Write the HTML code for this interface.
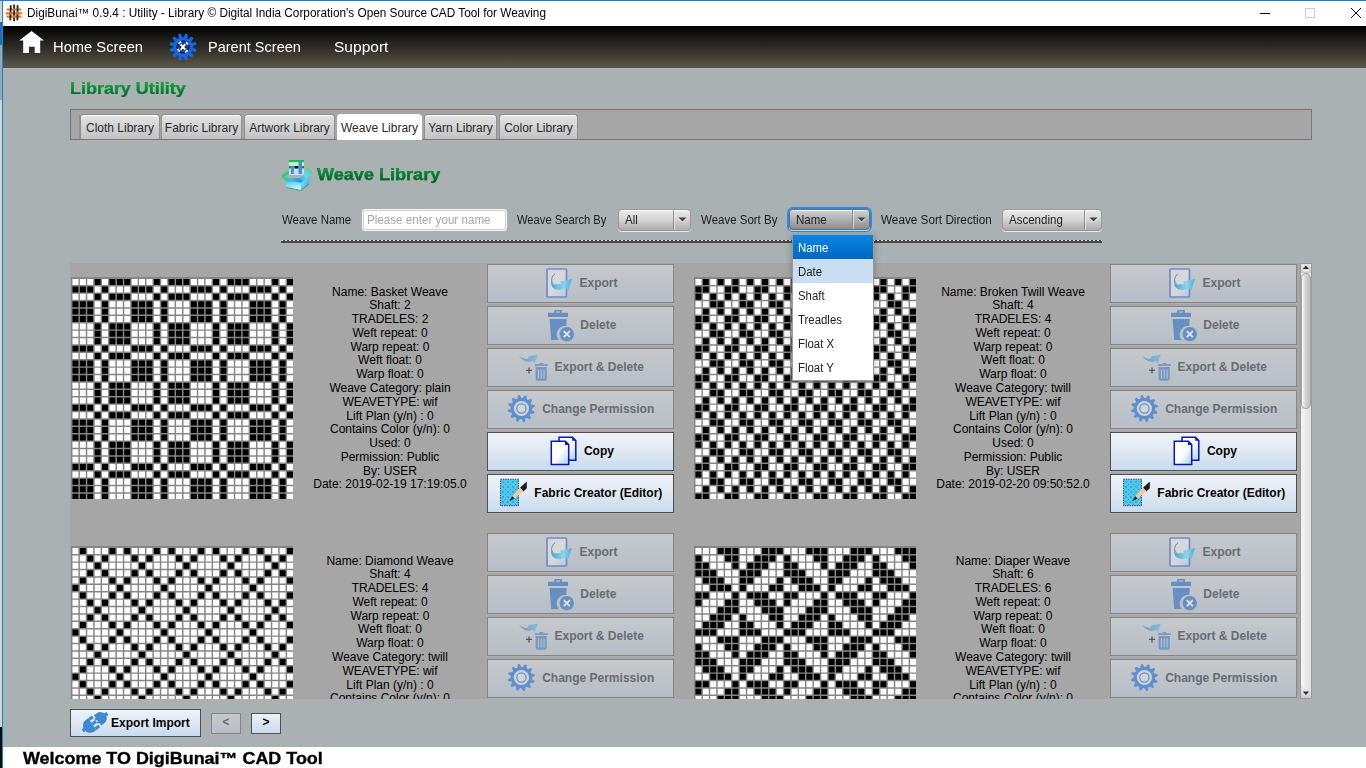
<!DOCTYPE html><html><head><meta charset="utf-8"><style>
html,body{margin:0;padding:0;}
body{width:1366px;height:768px;overflow:hidden;position:relative;background:#aab1b2;font-family:"Liberation Sans", sans-serif;}
.t{position:absolute;white-space:pre;font-family:"Liberation Sans", sans-serif;}
svg{display:block}
</style></head><body><div style="position:absolute;left:0px;top:0px;width:3px;height:768px;background:#d3d3d3"></div><div style="position:absolute;left:0px;top:727px;width:2px;height:41px;background:#0b0b0b"></div><div style="position:absolute;left:0px;top:22px;width:2px;height:23px;background:#1c6fc0"></div><div style="position:absolute;left:0px;top:45px;width:2px;height:55px;background:#9aa6b4"></div><div style="position:absolute;left:0px;top:0px;width:1366px;height:1px;background:#1883d7"></div><div style="position:absolute;left:2px;top:0px;width:1px;height:768px;background:#1883d7"></div><div style="position:absolute;left:3px;top:1px;width:1363px;height:25px;background:#fff"></div><div class="t" style="left:27px;top:6.84px;font-size:12px;line-height:12px;font-weight:400;color:#000;transform:scaleX(0.9836997725549659);transform-origin:left;">DigiBunai™ 0.9.4 : Utility - Library © Digital India Corporation's Open Source CAD Tool for Weaving</div><svg style="position:absolute;left:0px;top:0px" width="26" height="26" viewBox="0 0 26 26">
<g stroke="#e37a2c" stroke-width="2.2" stroke-linecap="round"><path d="M7.5 9.5H20.5M6.5 13.3H21.5M7.5 16.6H20.5"/></g>
<g stroke="#2e2e2e" stroke-width="1.9" stroke-linecap="round"><path d="M10.8 6L10.3 19.5M14.1 5.2L14.1 20.5M17.6 6L17.4 19.5"/></g>
<g stroke="#e37a2c" stroke-width="2.2"><path d="M13 9.5H15.2M9.6 13.3H11.6M16.4 13.3H18.6M13 16.6H15.2"/></g>
</svg><div style="position:absolute;left:1260px;top:13px;width:10px;height:1px;background:#000"></div><div style="position:absolute;left:1305px;top:8px;width:10px;height:10px;border:1px solid #cfcfcf;box-sizing:border-box"></div><svg style="position:absolute;left:1350px;top:7px" width="12" height="12" viewBox="0 0 12 12"><path d="M1 1L11 11M11 1L1 11" stroke="#000" stroke-width="1"/></svg><div style="position:absolute;left:3px;top:26px;width:1363px;height:42px;background:linear-gradient(#000 0%,#1d1b16 30%,#3c3a31 68%,#5a5648 96%,#545040 100%)"></div><div style="position:absolute;left:3px;top:68px;width:1363px;height:1px;background:#b4babc"></div><svg style="position:absolute;left:19px;top:31px" width="26" height="23" viewBox="0 0 26 23"><path d="M0.2 9.6L12.6 0L25 9.6H21.2V22H15.7V15.8H10V22H4.2V9.6Z" fill="#fff"/></svg><div class="t" style="left:52.5px;top:39.30px;font-size:15px;line-height:15px;font-weight:400;color:#fff;transform:scaleX(0.9814612868047983);transform-origin:left;">Home Screen</div><svg style="position:absolute;left:164.5px;top:29px" width="36" height="36" viewBox="-18 -18 36 36"><path d="M-2.1 -8.5L-1.3 -13.6H1.3L2.1 -8.5Z" fill="#1466e6" transform="rotate(15)"/><path d="M-2.1 -8.5L-1.3 -13.6H1.3L2.1 -8.5Z" fill="#1466e6" transform="rotate(45)"/><path d="M-2.1 -8.5L-1.3 -13.6H1.3L2.1 -8.5Z" fill="#1466e6" transform="rotate(75)"/><path d="M-2.1 -8.5L-1.3 -13.6H1.3L2.1 -8.5Z" fill="#1466e6" transform="rotate(105)"/><path d="M-2.1 -8.5L-1.3 -13.6H1.3L2.1 -8.5Z" fill="#1466e6" transform="rotate(135)"/><path d="M-2.1 -8.5L-1.3 -13.6H1.3L2.1 -8.5Z" fill="#1466e6" transform="rotate(165)"/><path d="M-2.1 -8.5L-1.3 -13.6H1.3L2.1 -8.5Z" fill="#1466e6" transform="rotate(195)"/><path d="M-2.1 -8.5L-1.3 -13.6H1.3L2.1 -8.5Z" fill="#1466e6" transform="rotate(225)"/><path d="M-2.1 -8.5L-1.3 -13.6H1.3L2.1 -8.5Z" fill="#1466e6" transform="rotate(255)"/><path d="M-2.1 -8.5L-1.3 -13.6H1.3L2.1 -8.5Z" fill="#1466e6" transform="rotate(285)"/><path d="M-2.1 -8.5L-1.3 -13.6H1.3L2.1 -8.5Z" fill="#1466e6" transform="rotate(315)"/><path d="M-2.1 -8.5L-1.3 -13.6H1.3L2.1 -8.5Z" fill="#1466e6" transform="rotate(345)"/><circle r="9.8" fill="#1466e6"/><circle r="6.6" fill="#1c1a15"/><circle r="5.4" fill="none" stroke="#fff" stroke-width="2" stroke-dasharray="3.2 5.3" transform="rotate(-60)"/><circle r="4.2" fill="none" stroke="#1466e6" stroke-width="1.2"/><path d="M-2.2 -2.6L2.2 2.6M2.2 -2.6L-2.2 2.6" stroke="#fff" stroke-width="2.2"/></svg><div class="t" style="left:207.5px;top:39.30px;font-size:15px;line-height:15px;font-weight:400;color:#fff;transform:scaleX(0.9688184377933049);transform-origin:left;">Parent Screen</div><div class="t" style="left:333.5px;top:39.30px;font-size:15px;line-height:15px;font-weight:400;color:#fff;transform:scaleX(1.0352045670789725);transform-origin:left;">Support</div><div class="t" style="left:69.8px;top:79.81px;font-size:17px;line-height:17px;font-weight:700;color:transparent;transform:scaleX(1.0556569343065694);transform-origin:left;background:linear-gradient(#12aa34 15%,#006a2c 85%);-webkit-background-clip:text;background-clip:text;-webkit-text-stroke:0.2px #0a8a34;">Library Utility</div><div style="position:absolute;left:70px;top:109px;width:1242px;height:31px;background:#a6a6a6;border:1px solid #767676;box-sizing:border-box"></div><div style="position:absolute;left:79px;top:115px;width:1px;height:24px;background:#909090"></div><div style="position:absolute;left:80px;top:114px;width:80px;height:25px;background:linear-gradient(#f4f4f4 0,#e0e0e0 10%,#c2c2c2 100%);border:1px solid #8f8f8f;border-bottom:none;border-radius:4px 4px 0 0;box-sizing:border-box;box-shadow:inset 0 1px 0 #fff"></div><div class="t" style="left:120.0px;transform:translateX(-50%) scaleX(1.0);top:121.84px;font-size:12px;line-height:12px;font-weight:400;color:#2a2a2a;">Cloth Library</div><div style="position:absolute;left:161px;top:114px;width:81px;height:25px;background:linear-gradient(#f4f4f4 0,#e0e0e0 10%,#c2c2c2 100%);border:1px solid #8f8f8f;border-bottom:none;border-radius:4px 4px 0 0;box-sizing:border-box;box-shadow:inset 0 1px 0 #fff"></div><div class="t" style="left:201.5px;transform:translateX(-50%) scaleX(1.0);top:121.84px;font-size:12px;line-height:12px;font-weight:400;color:#2a2a2a;">Fabric Library</div><div style="position:absolute;left:244px;top:114px;width:91px;height:25px;background:linear-gradient(#f4f4f4 0,#e0e0e0 10%,#c2c2c2 100%);border:1px solid #8f8f8f;border-bottom:none;border-radius:4px 4px 0 0;box-sizing:border-box;box-shadow:inset 0 1px 0 #fff"></div><div class="t" style="left:289.5px;transform:translateX(-50%) scaleX(1.0);top:121.84px;font-size:12px;line-height:12px;font-weight:400;color:#2a2a2a;">Artwork Library</div><div style="position:absolute;left:337px;top:114px;width:85px;height:26px;background:#fff;border-radius:4px 4px 0 0"></div><div class="t" style="left:379.5px;transform:translateX(-50%) scaleX(1.0);top:121.84px;font-size:12px;line-height:12px;font-weight:400;color:#2a2a2a;">Weave Library</div><div style="position:absolute;left:424px;top:114px;width:73px;height:25px;background:linear-gradient(#f4f4f4 0,#e0e0e0 10%,#c2c2c2 100%);border:1px solid #8f8f8f;border-bottom:none;border-radius:4px 4px 0 0;box-sizing:border-box;box-shadow:inset 0 1px 0 #fff"></div><div class="t" style="left:460.5px;transform:translateX(-50%) scaleX(1.0);top:121.84px;font-size:12px;line-height:12px;font-weight:400;color:#2a2a2a;">Yarn Library</div><div style="position:absolute;left:499px;top:114px;width:79px;height:25px;background:linear-gradient(#f4f4f4 0,#e0e0e0 10%,#c2c2c2 100%);border:1px solid #8f8f8f;border-bottom:none;border-radius:4px 4px 0 0;box-sizing:border-box;box-shadow:inset 0 1px 0 #fff"></div><div class="t" style="left:538.5px;transform:translateX(-50%) scaleX(1.0);top:121.84px;font-size:12px;line-height:12px;font-weight:400;color:#2a2a2a;">Color Library</div><svg style="position:absolute;left:278px;top:156px" width="38" height="38" viewBox="0 0 38 38">
<defs><linearGradient id="bxf" x1="0" y1="0" x2="0.3" y2="1"><stop offset="0" stop-color="#38c8f0"/><stop offset="1" stop-color="#d8f8ff"/></linearGradient>
<linearGradient id="bxr" x1="0" y1="0" x2="1" y2="1"><stop offset="0" stop-color="#a8e8ff"/><stop offset="1" stop-color="#10a8e0"/></linearGradient>
<linearGradient id="bxl" x1="0" y1="0" x2="1" y2="0"><stop offset="0" stop-color="#20d870"/><stop offset="0.5" stop-color="#40b8e8"/><stop offset="1" stop-color="#0898d8"/></linearGradient></defs>
<rect x="11" y="4" width="15" height="15" fill="#c4e2f4"/><rect x="11" y="4" width="15" height="2.2" fill="#10c040"/>
<rect x="11" y="10" width="15" height="2.4" fill="#2a7a50"/><rect x="11" y="6.3" width="15" height="3.7" fill="#c0f0d0"/>
<rect x="13" y="10" width="2.8" height="8" fill="#4a8ed0"/><rect x="20.5" y="5" width="3.5" height="13" fill="#4a8ed0"/><rect x="17" y="10" width="3" height="2.4" fill="#101010"/>
<path d="M8 25L23 26.5L23 34.5L8.5 31.5Z" fill="url(#bxf)"/>
<path d="M23 26.5L31.5 20L31 28L23 34.5Z" fill="url(#bxr)"/>
<path d="M3 19.5L11 14.5L11 17.5L5 22.5Z" fill="#30d070"/>
<path d="M5 21.5L22.5 22.5L23.5 26.5L8 25Z" fill="url(#bxl)"/>
<linearGradient id="bxrf" x1="1" y1="0" x2="0" y2="1"><stop offset="0" stop-color="#30e070"/><stop offset="0.6" stop-color="#70d0f0"/><stop offset="1" stop-color="#10a0e0"/></linearGradient><path d="M22.5 22.5L30 11L35 17L23.5 26.5Z" fill="url(#bxrf)"/>
<path d="M23.5 26.5L35 17L31.5 20Z" fill="#20b8e0"/>
<path d="M8.5 31.5L23 34.5L31 28" fill="none" stroke="#3a8a50" stroke-width="0.8"/>
</svg><div class="t" style="left:317.3px;top:166.31px;font-size:17px;line-height:17px;font-weight:700;color:transparent;transform:scaleX(1.0629853321829164);transform-origin:left;background:linear-gradient(#0c9c38 15%,#00642c 80%);-webkit-background-clip:text;background-clip:text;-webkit-text-stroke:0.25px #00742e;">Weave Library</div><div class="t" style="left:281.5px;top:213.84px;font-size:12px;line-height:12px;font-weight:400;color:#1a1a1a;transform:scaleX(0.9547461368653422);transform-origin:left;">Weave Name</div><div style="position:absolute;left:363px;top:210px;width:143px;height:20px;background:#fff;border:1px solid #cfcfcf;border-radius:2px;box-sizing:border-box;box-shadow:0 0 0 1px #f4f4f4"></div><div class="t" style="left:366.8px;top:213.84px;font-size:12px;line-height:12px;font-weight:400;color:#a8a8a8;transform:scaleX(0.9700965387332234);transform-origin:left;">Please enter your name</div><div class="t" style="left:517.2px;top:213.84px;font-size:12px;line-height:12px;font-weight:400;color:#1a1a1a;transform:scaleX(0.9329020139830951);transform-origin:left;">Weave Search By</div><div style="position:absolute;left:618px;top:209px;width:73px;height:22px;background:linear-gradient(#ececec,#d6d6d6 45%,#adadad);border:1px solid #9a9a9a;border-radius:4px;box-sizing:border-box;box-shadow:inset 0 1px 0 rgba(255,255,255,0.8),0 1px 0 rgba(255,255,255,0.7)"></div><div style="position:absolute;left:673px;top:210px;width:1px;height:20px;background:#8c8c8c"></div><div style="position:absolute;left:674px;top:210px;width:1px;height:20px;background:rgba(255,255,255,0.5)"></div><svg style="position:absolute;left:678px;top:217px" width="9" height="7" viewBox="0 0 9 7"><path d="M0.5 1.5H8.5L4.5 5.5Z" fill="#fff" opacity="0.7"/><path d="M0.5 0.5H8.5L4.5 4.5Z" fill="#454545"/></svg><div class="t" style="left:625px;top:214.34px;font-size:12px;line-height:12px;font-weight:400;color:#222;transform:scaleX(0.96);transform-origin:left;">All</div><div class="t" style="left:701.3px;top:213.84px;font-size:12px;line-height:12px;font-weight:400;color:#1a1a1a;transform:scaleX(0.9572735246209748);transform-origin:left;">Weave Sort By</div><div style="position:absolute;left:787px;top:207px;width:85px;height:25px;border:2px solid #1e8ff0;border-radius:6px;box-sizing:border-box"></div><div style="position:absolute;left:789px;top:209px;width:81px;height:21px;background:linear-gradient(#d2d2d2,#b0b0b0 50%,#8c8c8c);border:1px solid #6e6e6e;border-radius:4px;box-sizing:border-box;box-shadow:inset 0 1px 0 rgba(255,255,255,0.8),0 1px 0 rgba(255,255,255,0.7)"></div><div style="position:absolute;left:852px;top:210px;width:1px;height:19px;background:#8c8c8c"></div><div style="position:absolute;left:853px;top:210px;width:1px;height:19px;background:rgba(255,255,255,0.5)"></div><svg style="position:absolute;left:857px;top:217px" width="9" height="7" viewBox="0 0 9 7"><path d="M0.5 1.5H8.5L4.5 5.5Z" fill="#fff" opacity="0.7"/><path d="M0.5 0.5H8.5L4.5 4.5Z" fill="#454545"/></svg><div class="t" style="left:796px;top:214.34px;font-size:12px;line-height:12px;font-weight:400;color:#222;transform:scaleX(0.96);transform-origin:left;">Name</div><div class="t" style="left:880.5px;top:213.84px;font-size:12px;line-height:12px;font-weight:400;color:#1a1a1a;transform:scaleX(0.9782608695652174);transform-origin:left;">Weave Sort Direction</div><div style="position:absolute;left:1002px;top:209px;width:100px;height:22px;background:linear-gradient(#ececec,#d6d6d6 45%,#adadad);border:1px solid #9a9a9a;border-radius:4px;box-sizing:border-box;box-shadow:inset 0 1px 0 rgba(255,255,255,0.8),0 1px 0 rgba(255,255,255,0.7)"></div><div style="position:absolute;left:1084px;top:210px;width:1px;height:20px;background:#8c8c8c"></div><div style="position:absolute;left:1085px;top:210px;width:1px;height:20px;background:rgba(255,255,255,0.5)"></div><svg style="position:absolute;left:1089px;top:217px" width="9" height="7" viewBox="0 0 9 7"><path d="M0.5 1.5H8.5L4.5 5.5Z" fill="#fff" opacity="0.7"/><path d="M0.5 0.5H8.5L4.5 4.5Z" fill="#454545"/></svg><div class="t" style="left:1009px;top:214.34px;font-size:12px;line-height:12px;font-weight:400;color:#222;transform:scaleX(0.96);transform-origin:left;">Ascending</div><div style="position:absolute;left:281px;top:240px;width:821px;height:1px;background:repeating-linear-gradient(90deg,#e4e6e6 0 2px,#404040 2px 4px)"></div><div style="position:absolute;left:281px;top:241px;width:821px;height:2px;background:#474747"></div><div style="position:absolute;left:70px;top:263px;width:1230px;height:436px;overflow:hidden;background:#a6a6a6"><div style="position:absolute;left:-70px;top:-263px;width:1366px;height:768px"><svg style="position:absolute;left:71px;top:277px" width="222" height="222" viewBox="0 0 300 300"><rect width="300" height="300" fill="#868686"/><path fill="#000" d="M32 2.8h8v8h-8zM52 2.8h8v8h-8zM62 2.8h8v8h-8zM72 2.8h8v8h-8zM112 2.8h8v8h-8zM132 2.8h8v8h-8zM142 2.8h8v8h-8zM152 2.8h8v8h-8zM192 2.8h8v8h-8zM212 2.8h8v8h-8zM222 2.8h8v8h-8zM232 2.8h8v8h-8zM272 2.8h8v8h-8zM292 2.8h8v8h-8zM2 12.8h8v8h-8zM12 12.8h8v8h-8zM22 12.8h8v8h-8zM42 12.8h8v8h-8zM82 12.8h8v8h-8zM92 12.8h8v8h-8zM102 12.8h8v8h-8zM122 12.8h8v8h-8zM162 12.8h8v8h-8zM172 12.8h8v8h-8zM182 12.8h8v8h-8zM202 12.8h8v8h-8zM242 12.8h8v8h-8zM252 12.8h8v8h-8zM262 12.8h8v8h-8zM282 12.8h8v8h-8zM32 22.8h8v8h-8zM52 22.8h8v8h-8zM62 22.8h8v8h-8zM72 22.8h8v8h-8zM112 22.8h8v8h-8zM132 22.8h8v8h-8zM142 22.8h8v8h-8zM152 22.8h8v8h-8zM192 22.8h8v8h-8zM212 22.8h8v8h-8zM222 22.8h8v8h-8zM232 22.8h8v8h-8zM272 22.8h8v8h-8zM292 22.8h8v8h-8zM2 32.8h8v8h-8zM12 32.8h8v8h-8zM22 32.8h8v8h-8zM42 32.8h8v8h-8zM82 32.8h8v8h-8zM92 32.8h8v8h-8zM102 32.8h8v8h-8zM122 32.8h8v8h-8zM162 32.8h8v8h-8zM172 32.8h8v8h-8zM182 32.8h8v8h-8zM202 32.8h8v8h-8zM242 32.8h8v8h-8zM252 32.8h8v8h-8zM262 32.8h8v8h-8zM282 32.8h8v8h-8zM2 42.8h8v8h-8zM12 42.8h8v8h-8zM22 42.8h8v8h-8zM42 42.8h8v8h-8zM82 42.8h8v8h-8zM92 42.8h8v8h-8zM102 42.8h8v8h-8zM122 42.8h8v8h-8zM162 42.8h8v8h-8zM172 42.8h8v8h-8zM182 42.8h8v8h-8zM202 42.8h8v8h-8zM242 42.8h8v8h-8zM252 42.8h8v8h-8zM262 42.8h8v8h-8zM282 42.8h8v8h-8zM2 52.8h8v8h-8zM12 52.8h8v8h-8zM22 52.8h8v8h-8zM42 52.8h8v8h-8zM82 52.8h8v8h-8zM92 52.8h8v8h-8zM102 52.8h8v8h-8zM122 52.8h8v8h-8zM162 52.8h8v8h-8zM172 52.8h8v8h-8zM182 52.8h8v8h-8zM202 52.8h8v8h-8zM242 52.8h8v8h-8zM252 52.8h8v8h-8zM262 52.8h8v8h-8zM282 52.8h8v8h-8zM32 62.8h8v8h-8zM52 62.8h8v8h-8zM62 62.8h8v8h-8zM72 62.8h8v8h-8zM112 62.8h8v8h-8zM132 62.8h8v8h-8zM142 62.8h8v8h-8zM152 62.8h8v8h-8zM192 62.8h8v8h-8zM212 62.8h8v8h-8zM222 62.8h8v8h-8zM232 62.8h8v8h-8zM272 62.8h8v8h-8zM292 62.8h8v8h-8zM32 72.8h8v8h-8zM52 72.8h8v8h-8zM62 72.8h8v8h-8zM72 72.8h8v8h-8zM112 72.8h8v8h-8zM132 72.8h8v8h-8zM142 72.8h8v8h-8zM152 72.8h8v8h-8zM192 72.8h8v8h-8zM212 72.8h8v8h-8zM222 72.8h8v8h-8zM232 72.8h8v8h-8zM272 72.8h8v8h-8zM292 72.8h8v8h-8zM32 82.8h8v8h-8zM52 82.8h8v8h-8zM62 82.8h8v8h-8zM72 82.8h8v8h-8zM112 82.8h8v8h-8zM132 82.8h8v8h-8zM142 82.8h8v8h-8zM152 82.8h8v8h-8zM192 82.8h8v8h-8zM212 82.8h8v8h-8zM222 82.8h8v8h-8zM232 82.8h8v8h-8zM272 82.8h8v8h-8zM292 82.8h8v8h-8zM2 92.8h8v8h-8zM12 92.8h8v8h-8zM22 92.8h8v8h-8zM42 92.8h8v8h-8zM82 92.8h8v8h-8zM92 92.8h8v8h-8zM102 92.8h8v8h-8zM122 92.8h8v8h-8zM162 92.8h8v8h-8zM172 92.8h8v8h-8zM182 92.8h8v8h-8zM202 92.8h8v8h-8zM242 92.8h8v8h-8zM252 92.8h8v8h-8zM262 92.8h8v8h-8zM282 92.8h8v8h-8zM32 102.8h8v8h-8zM52 102.8h8v8h-8zM62 102.8h8v8h-8zM72 102.8h8v8h-8zM112 102.8h8v8h-8zM132 102.8h8v8h-8zM142 102.8h8v8h-8zM152 102.8h8v8h-8zM192 102.8h8v8h-8zM212 102.8h8v8h-8zM222 102.8h8v8h-8zM232 102.8h8v8h-8zM272 102.8h8v8h-8zM292 102.8h8v8h-8zM2 112.8h8v8h-8zM12 112.8h8v8h-8zM22 112.8h8v8h-8zM42 112.8h8v8h-8zM82 112.8h8v8h-8zM92 112.8h8v8h-8zM102 112.8h8v8h-8zM122 112.8h8v8h-8zM162 112.8h8v8h-8zM172 112.8h8v8h-8zM182 112.8h8v8h-8zM202 112.8h8v8h-8zM242 112.8h8v8h-8zM252 112.8h8v8h-8zM262 112.8h8v8h-8zM282 112.8h8v8h-8zM2 122.8h8v8h-8zM12 122.8h8v8h-8zM22 122.8h8v8h-8zM42 122.8h8v8h-8zM82 122.8h8v8h-8zM92 122.8h8v8h-8zM102 122.8h8v8h-8zM122 122.8h8v8h-8zM162 122.8h8v8h-8zM172 122.8h8v8h-8zM182 122.8h8v8h-8zM202 122.8h8v8h-8zM242 122.8h8v8h-8zM252 122.8h8v8h-8zM262 122.8h8v8h-8zM282 122.8h8v8h-8zM2 132.8h8v8h-8zM12 132.8h8v8h-8zM22 132.8h8v8h-8zM42 132.8h8v8h-8zM82 132.8h8v8h-8zM92 132.8h8v8h-8zM102 132.8h8v8h-8zM122 132.8h8v8h-8zM162 132.8h8v8h-8zM172 132.8h8v8h-8zM182 132.8h8v8h-8zM202 132.8h8v8h-8zM242 132.8h8v8h-8zM252 132.8h8v8h-8zM262 132.8h8v8h-8zM282 132.8h8v8h-8zM32 142.8h8v8h-8zM52 142.8h8v8h-8zM62 142.8h8v8h-8zM72 142.8h8v8h-8zM112 142.8h8v8h-8zM132 142.8h8v8h-8zM142 142.8h8v8h-8zM152 142.8h8v8h-8zM192 142.8h8v8h-8zM212 142.8h8v8h-8zM222 142.8h8v8h-8zM232 142.8h8v8h-8zM272 142.8h8v8h-8zM292 142.8h8v8h-8zM32 152.8h8v8h-8zM52 152.8h8v8h-8zM62 152.8h8v8h-8zM72 152.8h8v8h-8zM112 152.8h8v8h-8zM132 152.8h8v8h-8zM142 152.8h8v8h-8zM152 152.8h8v8h-8zM192 152.8h8v8h-8zM212 152.8h8v8h-8zM222 152.8h8v8h-8zM232 152.8h8v8h-8zM272 152.8h8v8h-8zM292 152.8h8v8h-8zM32 162.8h8v8h-8zM52 162.8h8v8h-8zM62 162.8h8v8h-8zM72 162.8h8v8h-8zM112 162.8h8v8h-8zM132 162.8h8v8h-8zM142 162.8h8v8h-8zM152 162.8h8v8h-8zM192 162.8h8v8h-8zM212 162.8h8v8h-8zM222 162.8h8v8h-8zM232 162.8h8v8h-8zM272 162.8h8v8h-8zM292 162.8h8v8h-8zM2 172.8h8v8h-8zM12 172.8h8v8h-8zM22 172.8h8v8h-8zM42 172.8h8v8h-8zM82 172.8h8v8h-8zM92 172.8h8v8h-8zM102 172.8h8v8h-8zM122 172.8h8v8h-8zM162 172.8h8v8h-8zM172 172.8h8v8h-8zM182 172.8h8v8h-8zM202 172.8h8v8h-8zM242 172.8h8v8h-8zM252 172.8h8v8h-8zM262 172.8h8v8h-8zM282 172.8h8v8h-8zM32 182.8h8v8h-8zM52 182.8h8v8h-8zM62 182.8h8v8h-8zM72 182.8h8v8h-8zM112 182.8h8v8h-8zM132 182.8h8v8h-8zM142 182.8h8v8h-8zM152 182.8h8v8h-8zM192 182.8h8v8h-8zM212 182.8h8v8h-8zM222 182.8h8v8h-8zM232 182.8h8v8h-8zM272 182.8h8v8h-8zM292 182.8h8v8h-8zM2 192.8h8v8h-8zM12 192.8h8v8h-8zM22 192.8h8v8h-8zM42 192.8h8v8h-8zM82 192.8h8v8h-8zM92 192.8h8v8h-8zM102 192.8h8v8h-8zM122 192.8h8v8h-8zM162 192.8h8v8h-8zM172 192.8h8v8h-8zM182 192.8h8v8h-8zM202 192.8h8v8h-8zM242 192.8h8v8h-8zM252 192.8h8v8h-8zM262 192.8h8v8h-8zM282 192.8h8v8h-8zM2 202.8h8v8h-8zM12 202.8h8v8h-8zM22 202.8h8v8h-8zM42 202.8h8v8h-8zM82 202.8h8v8h-8zM92 202.8h8v8h-8zM102 202.8h8v8h-8zM122 202.8h8v8h-8zM162 202.8h8v8h-8zM172 202.8h8v8h-8zM182 202.8h8v8h-8zM202 202.8h8v8h-8zM242 202.8h8v8h-8zM252 202.8h8v8h-8zM262 202.8h8v8h-8zM282 202.8h8v8h-8zM2 212.8h8v8h-8zM12 212.8h8v8h-8zM22 212.8h8v8h-8zM42 212.8h8v8h-8zM82 212.8h8v8h-8zM92 212.8h8v8h-8zM102 212.8h8v8h-8zM122 212.8h8v8h-8zM162 212.8h8v8h-8zM172 212.8h8v8h-8zM182 212.8h8v8h-8zM202 212.8h8v8h-8zM242 212.8h8v8h-8zM252 212.8h8v8h-8zM262 212.8h8v8h-8zM282 212.8h8v8h-8zM32 222.8h8v8h-8zM52 222.8h8v8h-8zM62 222.8h8v8h-8zM72 222.8h8v8h-8zM112 222.8h8v8h-8zM132 222.8h8v8h-8zM142 222.8h8v8h-8zM152 222.8h8v8h-8zM192 222.8h8v8h-8zM212 222.8h8v8h-8zM222 222.8h8v8h-8zM232 222.8h8v8h-8zM272 222.8h8v8h-8zM292 222.8h8v8h-8zM32 232.8h8v8h-8zM52 232.8h8v8h-8zM62 232.8h8v8h-8zM72 232.8h8v8h-8zM112 232.8h8v8h-8zM132 232.8h8v8h-8zM142 232.8h8v8h-8zM152 232.8h8v8h-8zM192 232.8h8v8h-8zM212 232.8h8v8h-8zM222 232.8h8v8h-8zM232 232.8h8v8h-8zM272 232.8h8v8h-8zM292 232.8h8v8h-8zM32 242.8h8v8h-8zM52 242.8h8v8h-8zM62 242.8h8v8h-8zM72 242.8h8v8h-8zM112 242.8h8v8h-8zM132 242.8h8v8h-8zM142 242.8h8v8h-8zM152 242.8h8v8h-8zM192 242.8h8v8h-8zM212 242.8h8v8h-8zM222 242.8h8v8h-8zM232 242.8h8v8h-8zM272 242.8h8v8h-8zM292 242.8h8v8h-8zM2 252.8h8v8h-8zM12 252.8h8v8h-8zM22 252.8h8v8h-8zM42 252.8h8v8h-8zM82 252.8h8v8h-8zM92 252.8h8v8h-8zM102 252.8h8v8h-8zM122 252.8h8v8h-8zM162 252.8h8v8h-8zM172 252.8h8v8h-8zM182 252.8h8v8h-8zM202 252.8h8v8h-8zM242 252.8h8v8h-8zM252 252.8h8v8h-8zM262 252.8h8v8h-8zM282 252.8h8v8h-8zM32 262.8h8v8h-8zM52 262.8h8v8h-8zM62 262.8h8v8h-8zM72 262.8h8v8h-8zM112 262.8h8v8h-8zM132 262.8h8v8h-8zM142 262.8h8v8h-8zM152 262.8h8v8h-8zM192 262.8h8v8h-8zM212 262.8h8v8h-8zM222 262.8h8v8h-8zM232 262.8h8v8h-8zM272 262.8h8v8h-8zM292 262.8h8v8h-8zM2 272.8h8v8h-8zM12 272.8h8v8h-8zM22 272.8h8v8h-8zM42 272.8h8v8h-8zM82 272.8h8v8h-8zM92 272.8h8v8h-8zM102 272.8h8v8h-8zM122 272.8h8v8h-8zM162 272.8h8v8h-8zM172 272.8h8v8h-8zM182 272.8h8v8h-8zM202 272.8h8v8h-8zM242 272.8h8v8h-8zM252 272.8h8v8h-8zM262 272.8h8v8h-8zM282 272.8h8v8h-8zM2 282.8h8v8h-8zM12 282.8h8v8h-8zM22 282.8h8v8h-8zM42 282.8h8v8h-8zM82 282.8h8v8h-8zM92 282.8h8v8h-8zM102 282.8h8v8h-8zM122 282.8h8v8h-8zM162 282.8h8v8h-8zM172 282.8h8v8h-8zM182 282.8h8v8h-8zM202 282.8h8v8h-8zM242 282.8h8v8h-8zM252 282.8h8v8h-8zM262 282.8h8v8h-8zM282 282.8h8v8h-8zM2 292.8h8v8h-8zM12 292.8h8v8h-8zM22 292.8h8v8h-8zM42 292.8h8v8h-8zM82 292.8h8v8h-8zM92 292.8h8v8h-8zM102 292.8h8v8h-8zM122 292.8h8v8h-8zM162 292.8h8v8h-8zM172 292.8h8v8h-8zM182 292.8h8v8h-8zM202 292.8h8v8h-8zM242 292.8h8v8h-8zM252 292.8h8v8h-8zM262 292.8h8v8h-8zM282 292.8h8v8h-8z"/><path fill="#fff" d="M2 2.8h8v8h-8zM12 2.8h8v8h-8zM22 2.8h8v8h-8zM42 2.8h8v8h-8zM82 2.8h8v8h-8zM92 2.8h8v8h-8zM102 2.8h8v8h-8zM122 2.8h8v8h-8zM162 2.8h8v8h-8zM172 2.8h8v8h-8zM182 2.8h8v8h-8zM202 2.8h8v8h-8zM242 2.8h8v8h-8zM252 2.8h8v8h-8zM262 2.8h8v8h-8zM282 2.8h8v8h-8zM32 12.8h8v8h-8zM52 12.8h8v8h-8zM62 12.8h8v8h-8zM72 12.8h8v8h-8zM112 12.8h8v8h-8zM132 12.8h8v8h-8zM142 12.8h8v8h-8zM152 12.8h8v8h-8zM192 12.8h8v8h-8zM212 12.8h8v8h-8zM222 12.8h8v8h-8zM232 12.8h8v8h-8zM272 12.8h8v8h-8zM292 12.8h8v8h-8zM2 22.8h8v8h-8zM12 22.8h8v8h-8zM22 22.8h8v8h-8zM42 22.8h8v8h-8zM82 22.8h8v8h-8zM92 22.8h8v8h-8zM102 22.8h8v8h-8zM122 22.8h8v8h-8zM162 22.8h8v8h-8zM172 22.8h8v8h-8zM182 22.8h8v8h-8zM202 22.8h8v8h-8zM242 22.8h8v8h-8zM252 22.8h8v8h-8zM262 22.8h8v8h-8zM282 22.8h8v8h-8zM32 32.8h8v8h-8zM52 32.8h8v8h-8zM62 32.8h8v8h-8zM72 32.8h8v8h-8zM112 32.8h8v8h-8zM132 32.8h8v8h-8zM142 32.8h8v8h-8zM152 32.8h8v8h-8zM192 32.8h8v8h-8zM212 32.8h8v8h-8zM222 32.8h8v8h-8zM232 32.8h8v8h-8zM272 32.8h8v8h-8zM292 32.8h8v8h-8zM32 42.8h8v8h-8zM52 42.8h8v8h-8zM62 42.8h8v8h-8zM72 42.8h8v8h-8zM112 42.8h8v8h-8zM132 42.8h8v8h-8zM142 42.8h8v8h-8zM152 42.8h8v8h-8zM192 42.8h8v8h-8zM212 42.8h8v8h-8zM222 42.8h8v8h-8zM232 42.8h8v8h-8zM272 42.8h8v8h-8zM292 42.8h8v8h-8zM32 52.8h8v8h-8zM52 52.8h8v8h-8zM62 52.8h8v8h-8zM72 52.8h8v8h-8zM112 52.8h8v8h-8zM132 52.8h8v8h-8zM142 52.8h8v8h-8zM152 52.8h8v8h-8zM192 52.8h8v8h-8zM212 52.8h8v8h-8zM222 52.8h8v8h-8zM232 52.8h8v8h-8zM272 52.8h8v8h-8zM292 52.8h8v8h-8zM2 62.8h8v8h-8zM12 62.8h8v8h-8zM22 62.8h8v8h-8zM42 62.8h8v8h-8zM82 62.8h8v8h-8zM92 62.8h8v8h-8zM102 62.8h8v8h-8zM122 62.8h8v8h-8zM162 62.8h8v8h-8zM172 62.8h8v8h-8zM182 62.8h8v8h-8zM202 62.8h8v8h-8zM242 62.8h8v8h-8zM252 62.8h8v8h-8zM262 62.8h8v8h-8zM282 62.8h8v8h-8zM2 72.8h8v8h-8zM12 72.8h8v8h-8zM22 72.8h8v8h-8zM42 72.8h8v8h-8zM82 72.8h8v8h-8zM92 72.8h8v8h-8zM102 72.8h8v8h-8zM122 72.8h8v8h-8zM162 72.8h8v8h-8zM172 72.8h8v8h-8zM182 72.8h8v8h-8zM202 72.8h8v8h-8zM242 72.8h8v8h-8zM252 72.8h8v8h-8zM262 72.8h8v8h-8zM282 72.8h8v8h-8zM2 82.8h8v8h-8zM12 82.8h8v8h-8zM22 82.8h8v8h-8zM42 82.8h8v8h-8zM82 82.8h8v8h-8zM92 82.8h8v8h-8zM102 82.8h8v8h-8zM122 82.8h8v8h-8zM162 82.8h8v8h-8zM172 82.8h8v8h-8zM182 82.8h8v8h-8zM202 82.8h8v8h-8zM242 82.8h8v8h-8zM252 82.8h8v8h-8zM262 82.8h8v8h-8zM282 82.8h8v8h-8zM32 92.8h8v8h-8zM52 92.8h8v8h-8zM62 92.8h8v8h-8zM72 92.8h8v8h-8zM112 92.8h8v8h-8zM132 92.8h8v8h-8zM142 92.8h8v8h-8zM152 92.8h8v8h-8zM192 92.8h8v8h-8zM212 92.8h8v8h-8zM222 92.8h8v8h-8zM232 92.8h8v8h-8zM272 92.8h8v8h-8zM292 92.8h8v8h-8zM2 102.8h8v8h-8zM12 102.8h8v8h-8zM22 102.8h8v8h-8zM42 102.8h8v8h-8zM82 102.8h8v8h-8zM92 102.8h8v8h-8zM102 102.8h8v8h-8zM122 102.8h8v8h-8zM162 102.8h8v8h-8zM172 102.8h8v8h-8zM182 102.8h8v8h-8zM202 102.8h8v8h-8zM242 102.8h8v8h-8zM252 102.8h8v8h-8zM262 102.8h8v8h-8zM282 102.8h8v8h-8zM32 112.8h8v8h-8zM52 112.8h8v8h-8zM62 112.8h8v8h-8zM72 112.8h8v8h-8zM112 112.8h8v8h-8zM132 112.8h8v8h-8zM142 112.8h8v8h-8zM152 112.8h8v8h-8zM192 112.8h8v8h-8zM212 112.8h8v8h-8zM222 112.8h8v8h-8zM232 112.8h8v8h-8zM272 112.8h8v8h-8zM292 112.8h8v8h-8zM32 122.8h8v8h-8zM52 122.8h8v8h-8zM62 122.8h8v8h-8zM72 122.8h8v8h-8zM112 122.8h8v8h-8zM132 122.8h8v8h-8zM142 122.8h8v8h-8zM152 122.8h8v8h-8zM192 122.8h8v8h-8zM212 122.8h8v8h-8zM222 122.8h8v8h-8zM232 122.8h8v8h-8zM272 122.8h8v8h-8zM292 122.8h8v8h-8zM32 132.8h8v8h-8zM52 132.8h8v8h-8zM62 132.8h8v8h-8zM72 132.8h8v8h-8zM112 132.8h8v8h-8zM132 132.8h8v8h-8zM142 132.8h8v8h-8zM152 132.8h8v8h-8zM192 132.8h8v8h-8zM212 132.8h8v8h-8zM222 132.8h8v8h-8zM232 132.8h8v8h-8zM272 132.8h8v8h-8zM292 132.8h8v8h-8zM2 142.8h8v8h-8zM12 142.8h8v8h-8zM22 142.8h8v8h-8zM42 142.8h8v8h-8zM82 142.8h8v8h-8zM92 142.8h8v8h-8zM102 142.8h8v8h-8zM122 142.8h8v8h-8zM162 142.8h8v8h-8zM172 142.8h8v8h-8zM182 142.8h8v8h-8zM202 142.8h8v8h-8zM242 142.8h8v8h-8zM252 142.8h8v8h-8zM262 142.8h8v8h-8zM282 142.8h8v8h-8zM2 152.8h8v8h-8zM12 152.8h8v8h-8zM22 152.8h8v8h-8zM42 152.8h8v8h-8zM82 152.8h8v8h-8zM92 152.8h8v8h-8zM102 152.8h8v8h-8zM122 152.8h8v8h-8zM162 152.8h8v8h-8zM172 152.8h8v8h-8zM182 152.8h8v8h-8zM202 152.8h8v8h-8zM242 152.8h8v8h-8zM252 152.8h8v8h-8zM262 152.8h8v8h-8zM282 152.8h8v8h-8zM2 162.8h8v8h-8zM12 162.8h8v8h-8zM22 162.8h8v8h-8zM42 162.8h8v8h-8zM82 162.8h8v8h-8zM92 162.8h8v8h-8zM102 162.8h8v8h-8zM122 162.8h8v8h-8zM162 162.8h8v8h-8zM172 162.8h8v8h-8zM182 162.8h8v8h-8zM202 162.8h8v8h-8zM242 162.8h8v8h-8zM252 162.8h8v8h-8zM262 162.8h8v8h-8zM282 162.8h8v8h-8zM32 172.8h8v8h-8zM52 172.8h8v8h-8zM62 172.8h8v8h-8zM72 172.8h8v8h-8zM112 172.8h8v8h-8zM132 172.8h8v8h-8zM142 172.8h8v8h-8zM152 172.8h8v8h-8zM192 172.8h8v8h-8zM212 172.8h8v8h-8zM222 172.8h8v8h-8zM232 172.8h8v8h-8zM272 172.8h8v8h-8zM292 172.8h8v8h-8zM2 182.8h8v8h-8zM12 182.8h8v8h-8zM22 182.8h8v8h-8zM42 182.8h8v8h-8zM82 182.8h8v8h-8zM92 182.8h8v8h-8zM102 182.8h8v8h-8zM122 182.8h8v8h-8zM162 182.8h8v8h-8zM172 182.8h8v8h-8zM182 182.8h8v8h-8zM202 182.8h8v8h-8zM242 182.8h8v8h-8zM252 182.8h8v8h-8zM262 182.8h8v8h-8zM282 182.8h8v8h-8zM32 192.8h8v8h-8zM52 192.8h8v8h-8zM62 192.8h8v8h-8zM72 192.8h8v8h-8zM112 192.8h8v8h-8zM132 192.8h8v8h-8zM142 192.8h8v8h-8zM152 192.8h8v8h-8zM192 192.8h8v8h-8zM212 192.8h8v8h-8zM222 192.8h8v8h-8zM232 192.8h8v8h-8zM272 192.8h8v8h-8zM292 192.8h8v8h-8zM32 202.8h8v8h-8zM52 202.8h8v8h-8zM62 202.8h8v8h-8zM72 202.8h8v8h-8zM112 202.8h8v8h-8zM132 202.8h8v8h-8zM142 202.8h8v8h-8zM152 202.8h8v8h-8zM192 202.8h8v8h-8zM212 202.8h8v8h-8zM222 202.8h8v8h-8zM232 202.8h8v8h-8zM272 202.8h8v8h-8zM292 202.8h8v8h-8zM32 212.8h8v8h-8zM52 212.8h8v8h-8zM62 212.8h8v8h-8zM72 212.8h8v8h-8zM112 212.8h8v8h-8zM132 212.8h8v8h-8zM142 212.8h8v8h-8zM152 212.8h8v8h-8zM192 212.8h8v8h-8zM212 212.8h8v8h-8zM222 212.8h8v8h-8zM232 212.8h8v8h-8zM272 212.8h8v8h-8zM292 212.8h8v8h-8zM2 222.8h8v8h-8zM12 222.8h8v8h-8zM22 222.8h8v8h-8zM42 222.8h8v8h-8zM82 222.8h8v8h-8zM92 222.8h8v8h-8zM102 222.8h8v8h-8zM122 222.8h8v8h-8zM162 222.8h8v8h-8zM172 222.8h8v8h-8zM182 222.8h8v8h-8zM202 222.8h8v8h-8zM242 222.8h8v8h-8zM252 222.8h8v8h-8zM262 222.8h8v8h-8zM282 222.8h8v8h-8zM2 232.8h8v8h-8zM12 232.8h8v8h-8zM22 232.8h8v8h-8zM42 232.8h8v8h-8zM82 232.8h8v8h-8zM92 232.8h8v8h-8zM102 232.8h8v8h-8zM122 232.8h8v8h-8zM162 232.8h8v8h-8zM172 232.8h8v8h-8zM182 232.8h8v8h-8zM202 232.8h8v8h-8zM242 232.8h8v8h-8zM252 232.8h8v8h-8zM262 232.8h8v8h-8zM282 232.8h8v8h-8zM2 242.8h8v8h-8zM12 242.8h8v8h-8zM22 242.8h8v8h-8zM42 242.8h8v8h-8zM82 242.8h8v8h-8zM92 242.8h8v8h-8zM102 242.8h8v8h-8zM122 242.8h8v8h-8zM162 242.8h8v8h-8zM172 242.8h8v8h-8zM182 242.8h8v8h-8zM202 242.8h8v8h-8zM242 242.8h8v8h-8zM252 242.8h8v8h-8zM262 242.8h8v8h-8zM282 242.8h8v8h-8zM32 252.8h8v8h-8zM52 252.8h8v8h-8zM62 252.8h8v8h-8zM72 252.8h8v8h-8zM112 252.8h8v8h-8zM132 252.8h8v8h-8zM142 252.8h8v8h-8zM152 252.8h8v8h-8zM192 252.8h8v8h-8zM212 252.8h8v8h-8zM222 252.8h8v8h-8zM232 252.8h8v8h-8zM272 252.8h8v8h-8zM292 252.8h8v8h-8zM2 262.8h8v8h-8zM12 262.8h8v8h-8zM22 262.8h8v8h-8zM42 262.8h8v8h-8zM82 262.8h8v8h-8zM92 262.8h8v8h-8zM102 262.8h8v8h-8zM122 262.8h8v8h-8zM162 262.8h8v8h-8zM172 262.8h8v8h-8zM182 262.8h8v8h-8zM202 262.8h8v8h-8zM242 262.8h8v8h-8zM252 262.8h8v8h-8zM262 262.8h8v8h-8zM282 262.8h8v8h-8zM32 272.8h8v8h-8zM52 272.8h8v8h-8zM62 272.8h8v8h-8zM72 272.8h8v8h-8zM112 272.8h8v8h-8zM132 272.8h8v8h-8zM142 272.8h8v8h-8zM152 272.8h8v8h-8zM192 272.8h8v8h-8zM212 272.8h8v8h-8zM222 272.8h8v8h-8zM232 272.8h8v8h-8zM272 272.8h8v8h-8zM292 272.8h8v8h-8zM32 282.8h8v8h-8zM52 282.8h8v8h-8zM62 282.8h8v8h-8zM72 282.8h8v8h-8zM112 282.8h8v8h-8zM132 282.8h8v8h-8zM142 282.8h8v8h-8zM152 282.8h8v8h-8zM192 282.8h8v8h-8zM212 282.8h8v8h-8zM222 282.8h8v8h-8zM232 282.8h8v8h-8zM272 282.8h8v8h-8zM292 282.8h8v8h-8zM32 292.8h8v8h-8zM52 292.8h8v8h-8zM62 292.8h8v8h-8zM72 292.8h8v8h-8zM112 292.8h8v8h-8zM132 292.8h8v8h-8zM142 292.8h8v8h-8zM152 292.8h8v8h-8zM192 292.8h8v8h-8zM212 292.8h8v8h-8zM222 292.8h8v8h-8zM232 292.8h8v8h-8zM272 292.8h8v8h-8zM292 292.8h8v8h-8z"/></svg><div class="t" style="left:390px;transform:translateX(-50%) scaleX(1.0);top:285.64px;font-size:12px;line-height:12px;font-weight:400;color:#000;">Name: Basket Weave</div><div class="t" style="left:390px;transform:translateX(-50%) scaleX(1.0);top:299.41px;font-size:12px;line-height:12px;font-weight:400;color:#000;">Shaft: 2</div><div class="t" style="left:390px;transform:translateX(-50%) scaleX(1.0);top:313.18px;font-size:12px;line-height:12px;font-weight:400;color:#000;">TRADELES: 2</div><div class="t" style="left:390px;transform:translateX(-50%) scaleX(1.0);top:326.95px;font-size:12px;line-height:12px;font-weight:400;color:#000;">Weft repeat: 0</div><div class="t" style="left:390px;transform:translateX(-50%) scaleX(1.0);top:340.72px;font-size:12px;line-height:12px;font-weight:400;color:#000;">Warp repeat: 0</div><div class="t" style="left:390px;transform:translateX(-50%) scaleX(1.0);top:354.49px;font-size:12px;line-height:12px;font-weight:400;color:#000;">Weft float: 0</div><div class="t" style="left:390px;transform:translateX(-50%) scaleX(1.0);top:368.26px;font-size:12px;line-height:12px;font-weight:400;color:#000;">Warp float: 0</div><div class="t" style="left:390px;transform:translateX(-50%) scaleX(1.0);top:382.03px;font-size:12px;line-height:12px;font-weight:400;color:#000;">Weave Category: plain</div><div class="t" style="left:390px;transform:translateX(-50%) scaleX(1.0);top:395.80px;font-size:12px;line-height:12px;font-weight:400;color:#000;">WEAVETYPE: wif</div><div class="t" style="left:390px;transform:translateX(-50%) scaleX(1.0);top:409.57px;font-size:12px;line-height:12px;font-weight:400;color:#000;">Lift Plan (y/n) : 0</div><div class="t" style="left:390px;transform:translateX(-50%) scaleX(1.0);top:423.34px;font-size:12px;line-height:12px;font-weight:400;color:#000;">Contains Color (y/n): 0</div><div class="t" style="left:390px;transform:translateX(-50%) scaleX(1.0);top:437.11px;font-size:12px;line-height:12px;font-weight:400;color:#000;">Used: 0</div><div class="t" style="left:390px;transform:translateX(-50%) scaleX(1.0);top:450.88px;font-size:12px;line-height:12px;font-weight:400;color:#000;">Permission: Public</div><div class="t" style="left:390px;transform:translateX(-50%) scaleX(1.0);top:464.65px;font-size:12px;line-height:12px;font-weight:400;color:#000;">By: USER</div><div class="t" style="left:390px;transform:translateX(-50%) scaleX(1.0);top:478.42px;font-size:12px;line-height:12px;font-weight:400;color:#000;">Date: 2019-02-19 17:19:05.0</div><div style="position:absolute;left:487px;top:264px;width:187px;height:39px;background:linear-gradient(#c6c9cc,#b7bec7);border:1px solid #858585;box-sizing:border-box"></div><div style="position:absolute;left:487px;top:303px;width:187px;height:1px;background:#b0b8c0;opacity:0.6"></div><div class="t" style="left:579.5px;top:276.84px;font-size:12px;line-height:12px;font-weight:700;color:#676c73;">Export</div><svg style="position:absolute;left:540px;top:264px" width="40" height="40" viewBox="0 0 40 40">
<defs><linearGradient id="pg00" x1="0" y1="0" x2="1" y2="1"><stop offset="0.55" stop-color="#d8d8da"/><stop offset="1" stop-color="#aecde6"/></linearGradient>
<linearGradient id="ar00" x1="0" y1="0" x2="1" y2="0"><stop offset="0" stop-color="#3fa8d0"/><stop offset="0.6" stop-color="#8fd4e8"/><stop offset="1" stop-color="#4fb0d8"/></linearGradient></defs>
<rect x="7" y="5" width="19.5" height="28" rx="0.8" fill="url(#pg00)" stroke="#7a87c8" stroke-width="1.7"/>
<path d="M15 9.8C10.5 12.5 10 19 13.5 20.5L21 20L20.5 17.5L32 15L28.5 26L26 24.5C20 27 13 26.5 11.5 21C10 16 12 12 15 9.8Z" fill="url(#ar00)"/>
<path d="M15 9.8C11 12.5 10.5 18.5 13.8 20.2" fill="none" stroke="#2d6f96" stroke-width="1" opacity="0.7"/>
</svg><div style="position:absolute;left:487px;top:306px;width:187px;height:39px;background:linear-gradient(#c6c9cc,#b7bec7);border:1px solid #858585;box-sizing:border-box"></div><div style="position:absolute;left:487px;top:345px;width:187px;height:1px;background:#b0b8c0;opacity:0.6"></div><div class="t" style="left:580.3px;top:318.84px;font-size:12px;line-height:12px;font-weight:700;color:#676c73;">Delete</div><svg style="position:absolute;left:540px;top:306px" width="40" height="40" viewBox="0 0 40 40">
<path d="M14.3 4H21.9V6.8H28V11H8V6.8H14.3Z" fill="#6690c2"/><rect x="16" y="5.5" width="4" height="1" fill="#c8cdd4"/>
<path d="M9.6 13H26.8L26.2 20A8.5 8.5 0 0 0 18.8 34H11.2Z" fill="#6690c2"/>
<circle cx="26.8" cy="28.1" r="7.2" fill="#6690c2"/>
<path d="M23.8 25.1L29.8 31.1M29.8 25.1L23.8 31.1" stroke="#dfe3ea" stroke-width="1.9"/>
</svg><div style="position:absolute;left:487px;top:348px;width:187px;height:39px;background:linear-gradient(#c6c9cc,#b7bec7);border:1px solid #858585;box-sizing:border-box"></div><div style="position:absolute;left:487px;top:387px;width:187px;height:1px;background:#b0b8c0;opacity:0.6"></div><div class="t" style="left:554.5px;top:360.84px;font-size:12px;line-height:12px;font-weight:700;color:#676c73;">Export &amp; Delete</div><svg style="position:absolute;left:515px;top:348px" width="40" height="40" viewBox="0 0 40 40">
<defs><linearGradient id="ed00" x1="0" y1="0" x2="1" y2="0"><stop offset="0" stop-color="#7898c8"/><stop offset="1" stop-color="#80c0d8"/></linearGradient></defs>
<path d="M4 7.5C6.5 10 9.5 11 13 10.8L13.5 8.5L23 6.5L19.5 15.3L17.8 12.8C13.5 15.5 7.5 13.5 4 7.5Z" fill="url(#ed00)"/>
<path d="M11 22.4H17M14 19.4V25.4" stroke="#585858" stroke-width="1.3"/>
<path d="M20 16.2H32.8V18H20Z" fill="#7898c0"/><rect x="24.5" y="15" width="4" height="1.4" rx="0.7" fill="#7898c0"/>
<path d="M20.6 19H31.8V30.5Q31.8 32.8 29.5 32.8H22.9Q20.6 32.8 20.6 30.5Z" fill="#7898c0"/>
<path d="M23.4 21.5V30.5M26.2 21.5V30.5M29 21.5V30.5" stroke="#c6ccd4" stroke-width="0.9"/>
</svg><div style="position:absolute;left:487px;top:390px;width:187px;height:39px;background:linear-gradient(#c6c9cc,#b7bec7);border:1px solid #858585;box-sizing:border-box"></div><div style="position:absolute;left:487px;top:429px;width:187px;height:1px;background:#b0b8c0;opacity:0.6"></div><div class="t" style="left:542.2px;top:402.84px;font-size:12px;line-height:12px;font-weight:700;color:#676c73;">Change Permission</div><svg style="position:absolute;left:500px;top:390px" width="40" height="40" viewBox="0 0 40 40">
<polygon points="31.91,19.88 34.54,22.02 33.96,23.70 30.58,23.80 29.81,24.95 31.02,28.12 29.68,29.29 26.70,27.68 25.46,28.29 24.92,31.64 23.18,31.98 21.40,29.10 20.02,29.01 17.88,31.64 16.20,31.06 16.10,27.68 14.95,26.91 11.78,28.12 10.61,26.78 12.22,23.80 11.61,22.56 8.26,22.02 7.92,20.28 10.80,18.50 10.89,17.12 8.26,14.98 8.84,13.30 12.22,13.20 12.99,12.05 11.78,8.88 13.12,7.71 16.10,9.32 17.34,8.71 17.88,5.36 19.62,5.02 21.40,7.90 22.78,7.99 24.92,5.36 26.60,5.94 26.70,9.32 27.85,10.09 31.02,8.88 32.19,10.22 30.58,13.20 31.19,14.44 34.54,14.98 34.88,16.72 32.00,18.50" fill="#6090cc"/>
<circle cx="21.4" cy="18.5" r="7.6" fill="#cfd3d8"/><circle cx="21.4" cy="18.5" r="5.2" fill="#6090cc"/><circle cx="21.4" cy="18.5" r="4" fill="#d2d4d8"/>
</svg><div style="position:absolute;left:487px;top:432px;width:187px;height:39px;background:linear-gradient(#eef3f9,#dfe8f2 50%,#c9dbec);border:1px solid #505050;box-sizing:border-box"></div><div style="position:absolute;left:487px;top:471px;width:187px;height:1px;background:#b0b8c0;opacity:0.6"></div><div class="t" style="left:583.9px;top:444.84px;font-size:12px;line-height:12px;font-weight:700;color:#000;">Copy</div><svg style="position:absolute;left:540px;top:432px" width="40" height="40" viewBox="0 0 40 40">
<defs><linearGradient id="cp00" x1="0" y1="0" x2="1" y2="1"><stop offset="0.5" stop-color="#fff"/><stop offset="1" stop-color="#a8d0f8"/></linearGradient></defs>
<path d="M19 5.2H32.5L35.8 8.5V28.2H19Z" fill="url(#cp00)" stroke="#0a18b8" stroke-width="1.5"/>
<path d="M32.2 5.2V8.8H35.8Z" fill="#0a18b8"/>
<path d="M11.3 9.3H25.3L28.7 12.6V32.6H11.3Z" fill="url(#cp00)" stroke="#0a18b8" stroke-width="1.5"/>
<path d="M25 9.3V12.9H28.7Z" fill="#0a18b8"/>
</svg><div style="position:absolute;left:487px;top:474px;width:187px;height:39px;background:linear-gradient(#eef3f9,#dfe8f2 50%,#c9dbec);border:1px solid #505050;box-sizing:border-box"></div><div style="position:absolute;left:487px;top:513px;width:187px;height:1px;background:#b0b8c0;opacity:0.6"></div><div class="t" style="left:534.3px;top:486.84px;font-size:12px;line-height:12px;font-weight:700;color:#000;">Fabric Creator (Editor)</div><svg style="position:absolute;left:495px;top:474px" width="40" height="40" viewBox="0 0 40 40">
<defs><pattern id="fd00" width="5" height="5" patternUnits="userSpaceOnUse" x="6" y="6"><circle cx="2" cy="2" r="0.65" fill="#2e6f8e"/><circle cx="4.5" cy="4.5" r="0.55" fill="#3a88a8"/></pattern></defs>
<rect x="5.5" y="5.2" width="18" height="26.5" fill="#4cc8f0" stroke="#3a3a3a" stroke-width="1" stroke-dasharray="1.3 1.1"/>
<rect x="6" y="5.7" width="17" height="25.5" fill="url(#fd00)"/>
<path d="M25 13.8L31.8 7.5L31.8 14.2L28.4 17.6Z" fill="#1a1a1a"/>
<path d="M17.2 22.2L25 13.8L28.4 17.6L19.6 24.6Z" fill="#f2c9a0"/>
<path d="M14.2 27.2L17.2 22.2L19.6 24.6Z" fill="#1e1e1e"/>
</svg><svg style="position:absolute;left:694px;top:277px" width="222" height="222" viewBox="0 0 300 300"><rect width="300" height="300" fill="#868686"/><path fill="#000" d="M12 2.8h8v8h-8zM32 2.8h8v8h-8zM52 2.8h8v8h-8zM72 2.8h8v8h-8zM92 2.8h8v8h-8zM112 2.8h8v8h-8zM132 2.8h8v8h-8zM152 2.8h8v8h-8zM172 2.8h8v8h-8zM192 2.8h8v8h-8zM212 2.8h8v8h-8zM232 2.8h8v8h-8zM252 2.8h8v8h-8zM272 2.8h8v8h-8zM292 2.8h8v8h-8zM2 12.8h8v8h-8zM12 12.8h8v8h-8zM42 12.8h8v8h-8zM52 12.8h8v8h-8zM82 12.8h8v8h-8zM92 12.8h8v8h-8zM122 12.8h8v8h-8zM132 12.8h8v8h-8zM162 12.8h8v8h-8zM172 12.8h8v8h-8zM202 12.8h8v8h-8zM212 12.8h8v8h-8zM242 12.8h8v8h-8zM252 12.8h8v8h-8zM282 12.8h8v8h-8zM292 12.8h8v8h-8zM2 22.8h8v8h-8zM22 22.8h8v8h-8zM42 22.8h8v8h-8zM62 22.8h8v8h-8zM82 22.8h8v8h-8zM102 22.8h8v8h-8zM122 22.8h8v8h-8zM142 22.8h8v8h-8zM162 22.8h8v8h-8zM182 22.8h8v8h-8zM202 22.8h8v8h-8zM222 22.8h8v8h-8zM242 22.8h8v8h-8zM262 22.8h8v8h-8zM282 22.8h8v8h-8zM22 32.8h8v8h-8zM32 32.8h8v8h-8zM62 32.8h8v8h-8zM72 32.8h8v8h-8zM102 32.8h8v8h-8zM112 32.8h8v8h-8zM142 32.8h8v8h-8zM152 32.8h8v8h-8zM182 32.8h8v8h-8zM192 32.8h8v8h-8zM222 32.8h8v8h-8zM232 32.8h8v8h-8zM262 32.8h8v8h-8zM272 32.8h8v8h-8zM12 42.8h8v8h-8zM32 42.8h8v8h-8zM52 42.8h8v8h-8zM72 42.8h8v8h-8zM92 42.8h8v8h-8zM112 42.8h8v8h-8zM132 42.8h8v8h-8zM152 42.8h8v8h-8zM172 42.8h8v8h-8zM192 42.8h8v8h-8zM212 42.8h8v8h-8zM232 42.8h8v8h-8zM252 42.8h8v8h-8zM272 42.8h8v8h-8zM292 42.8h8v8h-8zM2 52.8h8v8h-8zM12 52.8h8v8h-8zM42 52.8h8v8h-8zM52 52.8h8v8h-8zM82 52.8h8v8h-8zM92 52.8h8v8h-8zM122 52.8h8v8h-8zM132 52.8h8v8h-8zM162 52.8h8v8h-8zM172 52.8h8v8h-8zM202 52.8h8v8h-8zM212 52.8h8v8h-8zM242 52.8h8v8h-8zM252 52.8h8v8h-8zM282 52.8h8v8h-8zM292 52.8h8v8h-8zM2 62.8h8v8h-8zM22 62.8h8v8h-8zM42 62.8h8v8h-8zM62 62.8h8v8h-8zM82 62.8h8v8h-8zM102 62.8h8v8h-8zM122 62.8h8v8h-8zM142 62.8h8v8h-8zM162 62.8h8v8h-8zM182 62.8h8v8h-8zM202 62.8h8v8h-8zM222 62.8h8v8h-8zM242 62.8h8v8h-8zM262 62.8h8v8h-8zM282 62.8h8v8h-8zM22 72.8h8v8h-8zM32 72.8h8v8h-8zM62 72.8h8v8h-8zM72 72.8h8v8h-8zM102 72.8h8v8h-8zM112 72.8h8v8h-8zM142 72.8h8v8h-8zM152 72.8h8v8h-8zM182 72.8h8v8h-8zM192 72.8h8v8h-8zM222 72.8h8v8h-8zM232 72.8h8v8h-8zM262 72.8h8v8h-8zM272 72.8h8v8h-8zM12 82.8h8v8h-8zM32 82.8h8v8h-8zM52 82.8h8v8h-8zM72 82.8h8v8h-8zM92 82.8h8v8h-8zM112 82.8h8v8h-8zM132 82.8h8v8h-8zM152 82.8h8v8h-8zM172 82.8h8v8h-8zM192 82.8h8v8h-8zM212 82.8h8v8h-8zM232 82.8h8v8h-8zM252 82.8h8v8h-8zM272 82.8h8v8h-8zM292 82.8h8v8h-8zM2 92.8h8v8h-8zM12 92.8h8v8h-8zM42 92.8h8v8h-8zM52 92.8h8v8h-8zM82 92.8h8v8h-8zM92 92.8h8v8h-8zM122 92.8h8v8h-8zM132 92.8h8v8h-8zM162 92.8h8v8h-8zM172 92.8h8v8h-8zM202 92.8h8v8h-8zM212 92.8h8v8h-8zM242 92.8h8v8h-8zM252 92.8h8v8h-8zM282 92.8h8v8h-8zM292 92.8h8v8h-8zM2 102.8h8v8h-8zM22 102.8h8v8h-8zM42 102.8h8v8h-8zM62 102.8h8v8h-8zM82 102.8h8v8h-8zM102 102.8h8v8h-8zM122 102.8h8v8h-8zM142 102.8h8v8h-8zM162 102.8h8v8h-8zM182 102.8h8v8h-8zM202 102.8h8v8h-8zM222 102.8h8v8h-8zM242 102.8h8v8h-8zM262 102.8h8v8h-8zM282 102.8h8v8h-8zM22 112.8h8v8h-8zM32 112.8h8v8h-8zM62 112.8h8v8h-8zM72 112.8h8v8h-8zM102 112.8h8v8h-8zM112 112.8h8v8h-8zM142 112.8h8v8h-8zM152 112.8h8v8h-8zM182 112.8h8v8h-8zM192 112.8h8v8h-8zM222 112.8h8v8h-8zM232 112.8h8v8h-8zM262 112.8h8v8h-8zM272 112.8h8v8h-8zM12 122.8h8v8h-8zM32 122.8h8v8h-8zM52 122.8h8v8h-8zM72 122.8h8v8h-8zM92 122.8h8v8h-8zM112 122.8h8v8h-8zM132 122.8h8v8h-8zM152 122.8h8v8h-8zM172 122.8h8v8h-8zM192 122.8h8v8h-8zM212 122.8h8v8h-8zM232 122.8h8v8h-8zM252 122.8h8v8h-8zM272 122.8h8v8h-8zM292 122.8h8v8h-8zM2 132.8h8v8h-8zM12 132.8h8v8h-8zM42 132.8h8v8h-8zM52 132.8h8v8h-8zM82 132.8h8v8h-8zM92 132.8h8v8h-8zM122 132.8h8v8h-8zM132 132.8h8v8h-8zM162 132.8h8v8h-8zM172 132.8h8v8h-8zM202 132.8h8v8h-8zM212 132.8h8v8h-8zM242 132.8h8v8h-8zM252 132.8h8v8h-8zM282 132.8h8v8h-8zM292 132.8h8v8h-8zM2 142.8h8v8h-8zM22 142.8h8v8h-8zM42 142.8h8v8h-8zM62 142.8h8v8h-8zM82 142.8h8v8h-8zM102 142.8h8v8h-8zM122 142.8h8v8h-8zM142 142.8h8v8h-8zM162 142.8h8v8h-8zM182 142.8h8v8h-8zM202 142.8h8v8h-8zM222 142.8h8v8h-8zM242 142.8h8v8h-8zM262 142.8h8v8h-8zM282 142.8h8v8h-8zM22 152.8h8v8h-8zM32 152.8h8v8h-8zM62 152.8h8v8h-8zM72 152.8h8v8h-8zM102 152.8h8v8h-8zM112 152.8h8v8h-8zM142 152.8h8v8h-8zM152 152.8h8v8h-8zM182 152.8h8v8h-8zM192 152.8h8v8h-8zM222 152.8h8v8h-8zM232 152.8h8v8h-8zM262 152.8h8v8h-8zM272 152.8h8v8h-8zM12 162.8h8v8h-8zM32 162.8h8v8h-8zM52 162.8h8v8h-8zM72 162.8h8v8h-8zM92 162.8h8v8h-8zM112 162.8h8v8h-8zM132 162.8h8v8h-8zM152 162.8h8v8h-8zM172 162.8h8v8h-8zM192 162.8h8v8h-8zM212 162.8h8v8h-8zM232 162.8h8v8h-8zM252 162.8h8v8h-8zM272 162.8h8v8h-8zM292 162.8h8v8h-8zM2 172.8h8v8h-8zM12 172.8h8v8h-8zM42 172.8h8v8h-8zM52 172.8h8v8h-8zM82 172.8h8v8h-8zM92 172.8h8v8h-8zM122 172.8h8v8h-8zM132 172.8h8v8h-8zM162 172.8h8v8h-8zM172 172.8h8v8h-8zM202 172.8h8v8h-8zM212 172.8h8v8h-8zM242 172.8h8v8h-8zM252 172.8h8v8h-8zM282 172.8h8v8h-8zM292 172.8h8v8h-8zM2 182.8h8v8h-8zM22 182.8h8v8h-8zM42 182.8h8v8h-8zM62 182.8h8v8h-8zM82 182.8h8v8h-8zM102 182.8h8v8h-8zM122 182.8h8v8h-8zM142 182.8h8v8h-8zM162 182.8h8v8h-8zM182 182.8h8v8h-8zM202 182.8h8v8h-8zM222 182.8h8v8h-8zM242 182.8h8v8h-8zM262 182.8h8v8h-8zM282 182.8h8v8h-8zM22 192.8h8v8h-8zM32 192.8h8v8h-8zM62 192.8h8v8h-8zM72 192.8h8v8h-8zM102 192.8h8v8h-8zM112 192.8h8v8h-8zM142 192.8h8v8h-8zM152 192.8h8v8h-8zM182 192.8h8v8h-8zM192 192.8h8v8h-8zM222 192.8h8v8h-8zM232 192.8h8v8h-8zM262 192.8h8v8h-8zM272 192.8h8v8h-8zM12 202.8h8v8h-8zM32 202.8h8v8h-8zM52 202.8h8v8h-8zM72 202.8h8v8h-8zM92 202.8h8v8h-8zM112 202.8h8v8h-8zM132 202.8h8v8h-8zM152 202.8h8v8h-8zM172 202.8h8v8h-8zM192 202.8h8v8h-8zM212 202.8h8v8h-8zM232 202.8h8v8h-8zM252 202.8h8v8h-8zM272 202.8h8v8h-8zM292 202.8h8v8h-8zM2 212.8h8v8h-8zM12 212.8h8v8h-8zM42 212.8h8v8h-8zM52 212.8h8v8h-8zM82 212.8h8v8h-8zM92 212.8h8v8h-8zM122 212.8h8v8h-8zM132 212.8h8v8h-8zM162 212.8h8v8h-8zM172 212.8h8v8h-8zM202 212.8h8v8h-8zM212 212.8h8v8h-8zM242 212.8h8v8h-8zM252 212.8h8v8h-8zM282 212.8h8v8h-8zM292 212.8h8v8h-8zM2 222.8h8v8h-8zM22 222.8h8v8h-8zM42 222.8h8v8h-8zM62 222.8h8v8h-8zM82 222.8h8v8h-8zM102 222.8h8v8h-8zM122 222.8h8v8h-8zM142 222.8h8v8h-8zM162 222.8h8v8h-8zM182 222.8h8v8h-8zM202 222.8h8v8h-8zM222 222.8h8v8h-8zM242 222.8h8v8h-8zM262 222.8h8v8h-8zM282 222.8h8v8h-8zM22 232.8h8v8h-8zM32 232.8h8v8h-8zM62 232.8h8v8h-8zM72 232.8h8v8h-8zM102 232.8h8v8h-8zM112 232.8h8v8h-8zM142 232.8h8v8h-8zM152 232.8h8v8h-8zM182 232.8h8v8h-8zM192 232.8h8v8h-8zM222 232.8h8v8h-8zM232 232.8h8v8h-8zM262 232.8h8v8h-8zM272 232.8h8v8h-8zM12 242.8h8v8h-8zM32 242.8h8v8h-8zM52 242.8h8v8h-8zM72 242.8h8v8h-8zM92 242.8h8v8h-8zM112 242.8h8v8h-8zM132 242.8h8v8h-8zM152 242.8h8v8h-8zM172 242.8h8v8h-8zM192 242.8h8v8h-8zM212 242.8h8v8h-8zM232 242.8h8v8h-8zM252 242.8h8v8h-8zM272 242.8h8v8h-8zM292 242.8h8v8h-8zM2 252.8h8v8h-8zM12 252.8h8v8h-8zM42 252.8h8v8h-8zM52 252.8h8v8h-8zM82 252.8h8v8h-8zM92 252.8h8v8h-8zM122 252.8h8v8h-8zM132 252.8h8v8h-8zM162 252.8h8v8h-8zM172 252.8h8v8h-8zM202 252.8h8v8h-8zM212 252.8h8v8h-8zM242 252.8h8v8h-8zM252 252.8h8v8h-8zM282 252.8h8v8h-8zM292 252.8h8v8h-8zM2 262.8h8v8h-8zM22 262.8h8v8h-8zM42 262.8h8v8h-8zM62 262.8h8v8h-8zM82 262.8h8v8h-8zM102 262.8h8v8h-8zM122 262.8h8v8h-8zM142 262.8h8v8h-8zM162 262.8h8v8h-8zM182 262.8h8v8h-8zM202 262.8h8v8h-8zM222 262.8h8v8h-8zM242 262.8h8v8h-8zM262 262.8h8v8h-8zM282 262.8h8v8h-8zM22 272.8h8v8h-8zM32 272.8h8v8h-8zM62 272.8h8v8h-8zM72 272.8h8v8h-8zM102 272.8h8v8h-8zM112 272.8h8v8h-8zM142 272.8h8v8h-8zM152 272.8h8v8h-8zM182 272.8h8v8h-8zM192 272.8h8v8h-8zM222 272.8h8v8h-8zM232 272.8h8v8h-8zM262 272.8h8v8h-8zM272 272.8h8v8h-8zM12 282.8h8v8h-8zM32 282.8h8v8h-8zM52 282.8h8v8h-8zM72 282.8h8v8h-8zM92 282.8h8v8h-8zM112 282.8h8v8h-8zM132 282.8h8v8h-8zM152 282.8h8v8h-8zM172 282.8h8v8h-8zM192 282.8h8v8h-8zM212 282.8h8v8h-8zM232 282.8h8v8h-8zM252 282.8h8v8h-8zM272 282.8h8v8h-8zM292 282.8h8v8h-8zM2 292.8h8v8h-8zM12 292.8h8v8h-8zM42 292.8h8v8h-8zM52 292.8h8v8h-8zM82 292.8h8v8h-8zM92 292.8h8v8h-8zM122 292.8h8v8h-8zM132 292.8h8v8h-8zM162 292.8h8v8h-8zM172 292.8h8v8h-8zM202 292.8h8v8h-8zM212 292.8h8v8h-8zM242 292.8h8v8h-8zM252 292.8h8v8h-8zM282 292.8h8v8h-8zM292 292.8h8v8h-8z"/><path fill="#fff" d="M2 2.8h8v8h-8zM22 2.8h8v8h-8zM42 2.8h8v8h-8zM62 2.8h8v8h-8zM82 2.8h8v8h-8zM102 2.8h8v8h-8zM122 2.8h8v8h-8zM142 2.8h8v8h-8zM162 2.8h8v8h-8zM182 2.8h8v8h-8zM202 2.8h8v8h-8zM222 2.8h8v8h-8zM242 2.8h8v8h-8zM262 2.8h8v8h-8zM282 2.8h8v8h-8zM22 12.8h8v8h-8zM32 12.8h8v8h-8zM62 12.8h8v8h-8zM72 12.8h8v8h-8zM102 12.8h8v8h-8zM112 12.8h8v8h-8zM142 12.8h8v8h-8zM152 12.8h8v8h-8zM182 12.8h8v8h-8zM192 12.8h8v8h-8zM222 12.8h8v8h-8zM232 12.8h8v8h-8zM262 12.8h8v8h-8zM272 12.8h8v8h-8zM12 22.8h8v8h-8zM32 22.8h8v8h-8zM52 22.8h8v8h-8zM72 22.8h8v8h-8zM92 22.8h8v8h-8zM112 22.8h8v8h-8zM132 22.8h8v8h-8zM152 22.8h8v8h-8zM172 22.8h8v8h-8zM192 22.8h8v8h-8zM212 22.8h8v8h-8zM232 22.8h8v8h-8zM252 22.8h8v8h-8zM272 22.8h8v8h-8zM292 22.8h8v8h-8zM2 32.8h8v8h-8zM12 32.8h8v8h-8zM42 32.8h8v8h-8zM52 32.8h8v8h-8zM82 32.8h8v8h-8zM92 32.8h8v8h-8zM122 32.8h8v8h-8zM132 32.8h8v8h-8zM162 32.8h8v8h-8zM172 32.8h8v8h-8zM202 32.8h8v8h-8zM212 32.8h8v8h-8zM242 32.8h8v8h-8zM252 32.8h8v8h-8zM282 32.8h8v8h-8zM292 32.8h8v8h-8zM2 42.8h8v8h-8zM22 42.8h8v8h-8zM42 42.8h8v8h-8zM62 42.8h8v8h-8zM82 42.8h8v8h-8zM102 42.8h8v8h-8zM122 42.8h8v8h-8zM142 42.8h8v8h-8zM162 42.8h8v8h-8zM182 42.8h8v8h-8zM202 42.8h8v8h-8zM222 42.8h8v8h-8zM242 42.8h8v8h-8zM262 42.8h8v8h-8zM282 42.8h8v8h-8zM22 52.8h8v8h-8zM32 52.8h8v8h-8zM62 52.8h8v8h-8zM72 52.8h8v8h-8zM102 52.8h8v8h-8zM112 52.8h8v8h-8zM142 52.8h8v8h-8zM152 52.8h8v8h-8zM182 52.8h8v8h-8zM192 52.8h8v8h-8zM222 52.8h8v8h-8zM232 52.8h8v8h-8zM262 52.8h8v8h-8zM272 52.8h8v8h-8zM12 62.8h8v8h-8zM32 62.8h8v8h-8zM52 62.8h8v8h-8zM72 62.8h8v8h-8zM92 62.8h8v8h-8zM112 62.8h8v8h-8zM132 62.8h8v8h-8zM152 62.8h8v8h-8zM172 62.8h8v8h-8zM192 62.8h8v8h-8zM212 62.8h8v8h-8zM232 62.8h8v8h-8zM252 62.8h8v8h-8zM272 62.8h8v8h-8zM292 62.8h8v8h-8zM2 72.8h8v8h-8zM12 72.8h8v8h-8zM42 72.8h8v8h-8zM52 72.8h8v8h-8zM82 72.8h8v8h-8zM92 72.8h8v8h-8zM122 72.8h8v8h-8zM132 72.8h8v8h-8zM162 72.8h8v8h-8zM172 72.8h8v8h-8zM202 72.8h8v8h-8zM212 72.8h8v8h-8zM242 72.8h8v8h-8zM252 72.8h8v8h-8zM282 72.8h8v8h-8zM292 72.8h8v8h-8zM2 82.8h8v8h-8zM22 82.8h8v8h-8zM42 82.8h8v8h-8zM62 82.8h8v8h-8zM82 82.8h8v8h-8zM102 82.8h8v8h-8zM122 82.8h8v8h-8zM142 82.8h8v8h-8zM162 82.8h8v8h-8zM182 82.8h8v8h-8zM202 82.8h8v8h-8zM222 82.8h8v8h-8zM242 82.8h8v8h-8zM262 82.8h8v8h-8zM282 82.8h8v8h-8zM22 92.8h8v8h-8zM32 92.8h8v8h-8zM62 92.8h8v8h-8zM72 92.8h8v8h-8zM102 92.8h8v8h-8zM112 92.8h8v8h-8zM142 92.8h8v8h-8zM152 92.8h8v8h-8zM182 92.8h8v8h-8zM192 92.8h8v8h-8zM222 92.8h8v8h-8zM232 92.8h8v8h-8zM262 92.8h8v8h-8zM272 92.8h8v8h-8zM12 102.8h8v8h-8zM32 102.8h8v8h-8zM52 102.8h8v8h-8zM72 102.8h8v8h-8zM92 102.8h8v8h-8zM112 102.8h8v8h-8zM132 102.8h8v8h-8zM152 102.8h8v8h-8zM172 102.8h8v8h-8zM192 102.8h8v8h-8zM212 102.8h8v8h-8zM232 102.8h8v8h-8zM252 102.8h8v8h-8zM272 102.8h8v8h-8zM292 102.8h8v8h-8zM2 112.8h8v8h-8zM12 112.8h8v8h-8zM42 112.8h8v8h-8zM52 112.8h8v8h-8zM82 112.8h8v8h-8zM92 112.8h8v8h-8zM122 112.8h8v8h-8zM132 112.8h8v8h-8zM162 112.8h8v8h-8zM172 112.8h8v8h-8zM202 112.8h8v8h-8zM212 112.8h8v8h-8zM242 112.8h8v8h-8zM252 112.8h8v8h-8zM282 112.8h8v8h-8zM292 112.8h8v8h-8zM2 122.8h8v8h-8zM22 122.8h8v8h-8zM42 122.8h8v8h-8zM62 122.8h8v8h-8zM82 122.8h8v8h-8zM102 122.8h8v8h-8zM122 122.8h8v8h-8zM142 122.8h8v8h-8zM162 122.8h8v8h-8zM182 122.8h8v8h-8zM202 122.8h8v8h-8zM222 122.8h8v8h-8zM242 122.8h8v8h-8zM262 122.8h8v8h-8zM282 122.8h8v8h-8zM22 132.8h8v8h-8zM32 132.8h8v8h-8zM62 132.8h8v8h-8zM72 132.8h8v8h-8zM102 132.8h8v8h-8zM112 132.8h8v8h-8zM142 132.8h8v8h-8zM152 132.8h8v8h-8zM182 132.8h8v8h-8zM192 132.8h8v8h-8zM222 132.8h8v8h-8zM232 132.8h8v8h-8zM262 132.8h8v8h-8zM272 132.8h8v8h-8zM12 142.8h8v8h-8zM32 142.8h8v8h-8zM52 142.8h8v8h-8zM72 142.8h8v8h-8zM92 142.8h8v8h-8zM112 142.8h8v8h-8zM132 142.8h8v8h-8zM152 142.8h8v8h-8zM172 142.8h8v8h-8zM192 142.8h8v8h-8zM212 142.8h8v8h-8zM232 142.8h8v8h-8zM252 142.8h8v8h-8zM272 142.8h8v8h-8zM292 142.8h8v8h-8zM2 152.8h8v8h-8zM12 152.8h8v8h-8zM42 152.8h8v8h-8zM52 152.8h8v8h-8zM82 152.8h8v8h-8zM92 152.8h8v8h-8zM122 152.8h8v8h-8zM132 152.8h8v8h-8zM162 152.8h8v8h-8zM172 152.8h8v8h-8zM202 152.8h8v8h-8zM212 152.8h8v8h-8zM242 152.8h8v8h-8zM252 152.8h8v8h-8zM282 152.8h8v8h-8zM292 152.8h8v8h-8zM2 162.8h8v8h-8zM22 162.8h8v8h-8zM42 162.8h8v8h-8zM62 162.8h8v8h-8zM82 162.8h8v8h-8zM102 162.8h8v8h-8zM122 162.8h8v8h-8zM142 162.8h8v8h-8zM162 162.8h8v8h-8zM182 162.8h8v8h-8zM202 162.8h8v8h-8zM222 162.8h8v8h-8zM242 162.8h8v8h-8zM262 162.8h8v8h-8zM282 162.8h8v8h-8zM22 172.8h8v8h-8zM32 172.8h8v8h-8zM62 172.8h8v8h-8zM72 172.8h8v8h-8zM102 172.8h8v8h-8zM112 172.8h8v8h-8zM142 172.8h8v8h-8zM152 172.8h8v8h-8zM182 172.8h8v8h-8zM192 172.8h8v8h-8zM222 172.8h8v8h-8zM232 172.8h8v8h-8zM262 172.8h8v8h-8zM272 172.8h8v8h-8zM12 182.8h8v8h-8zM32 182.8h8v8h-8zM52 182.8h8v8h-8zM72 182.8h8v8h-8zM92 182.8h8v8h-8zM112 182.8h8v8h-8zM132 182.8h8v8h-8zM152 182.8h8v8h-8zM172 182.8h8v8h-8zM192 182.8h8v8h-8zM212 182.8h8v8h-8zM232 182.8h8v8h-8zM252 182.8h8v8h-8zM272 182.8h8v8h-8zM292 182.8h8v8h-8zM2 192.8h8v8h-8zM12 192.8h8v8h-8zM42 192.8h8v8h-8zM52 192.8h8v8h-8zM82 192.8h8v8h-8zM92 192.8h8v8h-8zM122 192.8h8v8h-8zM132 192.8h8v8h-8zM162 192.8h8v8h-8zM172 192.8h8v8h-8zM202 192.8h8v8h-8zM212 192.8h8v8h-8zM242 192.8h8v8h-8zM252 192.8h8v8h-8zM282 192.8h8v8h-8zM292 192.8h8v8h-8zM2 202.8h8v8h-8zM22 202.8h8v8h-8zM42 202.8h8v8h-8zM62 202.8h8v8h-8zM82 202.8h8v8h-8zM102 202.8h8v8h-8zM122 202.8h8v8h-8zM142 202.8h8v8h-8zM162 202.8h8v8h-8zM182 202.8h8v8h-8zM202 202.8h8v8h-8zM222 202.8h8v8h-8zM242 202.8h8v8h-8zM262 202.8h8v8h-8zM282 202.8h8v8h-8zM22 212.8h8v8h-8zM32 212.8h8v8h-8zM62 212.8h8v8h-8zM72 212.8h8v8h-8zM102 212.8h8v8h-8zM112 212.8h8v8h-8zM142 212.8h8v8h-8zM152 212.8h8v8h-8zM182 212.8h8v8h-8zM192 212.8h8v8h-8zM222 212.8h8v8h-8zM232 212.8h8v8h-8zM262 212.8h8v8h-8zM272 212.8h8v8h-8zM12 222.8h8v8h-8zM32 222.8h8v8h-8zM52 222.8h8v8h-8zM72 222.8h8v8h-8zM92 222.8h8v8h-8zM112 222.8h8v8h-8zM132 222.8h8v8h-8zM152 222.8h8v8h-8zM172 222.8h8v8h-8zM192 222.8h8v8h-8zM212 222.8h8v8h-8zM232 222.8h8v8h-8zM252 222.8h8v8h-8zM272 222.8h8v8h-8zM292 222.8h8v8h-8zM2 232.8h8v8h-8zM12 232.8h8v8h-8zM42 232.8h8v8h-8zM52 232.8h8v8h-8zM82 232.8h8v8h-8zM92 232.8h8v8h-8zM122 232.8h8v8h-8zM132 232.8h8v8h-8zM162 232.8h8v8h-8zM172 232.8h8v8h-8zM202 232.8h8v8h-8zM212 232.8h8v8h-8zM242 232.8h8v8h-8zM252 232.8h8v8h-8zM282 232.8h8v8h-8zM292 232.8h8v8h-8zM2 242.8h8v8h-8zM22 242.8h8v8h-8zM42 242.8h8v8h-8zM62 242.8h8v8h-8zM82 242.8h8v8h-8zM102 242.8h8v8h-8zM122 242.8h8v8h-8zM142 242.8h8v8h-8zM162 242.8h8v8h-8zM182 242.8h8v8h-8zM202 242.8h8v8h-8zM222 242.8h8v8h-8zM242 242.8h8v8h-8zM262 242.8h8v8h-8zM282 242.8h8v8h-8zM22 252.8h8v8h-8zM32 252.8h8v8h-8zM62 252.8h8v8h-8zM72 252.8h8v8h-8zM102 252.8h8v8h-8zM112 252.8h8v8h-8zM142 252.8h8v8h-8zM152 252.8h8v8h-8zM182 252.8h8v8h-8zM192 252.8h8v8h-8zM222 252.8h8v8h-8zM232 252.8h8v8h-8zM262 252.8h8v8h-8zM272 252.8h8v8h-8zM12 262.8h8v8h-8zM32 262.8h8v8h-8zM52 262.8h8v8h-8zM72 262.8h8v8h-8zM92 262.8h8v8h-8zM112 262.8h8v8h-8zM132 262.8h8v8h-8zM152 262.8h8v8h-8zM172 262.8h8v8h-8zM192 262.8h8v8h-8zM212 262.8h8v8h-8zM232 262.8h8v8h-8zM252 262.8h8v8h-8zM272 262.8h8v8h-8zM292 262.8h8v8h-8zM2 272.8h8v8h-8zM12 272.8h8v8h-8zM42 272.8h8v8h-8zM52 272.8h8v8h-8zM82 272.8h8v8h-8zM92 272.8h8v8h-8zM122 272.8h8v8h-8zM132 272.8h8v8h-8zM162 272.8h8v8h-8zM172 272.8h8v8h-8zM202 272.8h8v8h-8zM212 272.8h8v8h-8zM242 272.8h8v8h-8zM252 272.8h8v8h-8zM282 272.8h8v8h-8zM292 272.8h8v8h-8zM2 282.8h8v8h-8zM22 282.8h8v8h-8zM42 282.8h8v8h-8zM62 282.8h8v8h-8zM82 282.8h8v8h-8zM102 282.8h8v8h-8zM122 282.8h8v8h-8zM142 282.8h8v8h-8zM162 282.8h8v8h-8zM182 282.8h8v8h-8zM202 282.8h8v8h-8zM222 282.8h8v8h-8zM242 282.8h8v8h-8zM262 282.8h8v8h-8zM282 282.8h8v8h-8zM22 292.8h8v8h-8zM32 292.8h8v8h-8zM62 292.8h8v8h-8zM72 292.8h8v8h-8zM102 292.8h8v8h-8zM112 292.8h8v8h-8zM142 292.8h8v8h-8zM152 292.8h8v8h-8zM182 292.8h8v8h-8zM192 292.8h8v8h-8zM222 292.8h8v8h-8zM232 292.8h8v8h-8zM262 292.8h8v8h-8zM272 292.8h8v8h-8z"/></svg><div class="t" style="left:1013px;transform:translateX(-50%) scaleX(1.0);top:285.64px;font-size:12px;line-height:12px;font-weight:400;color:#000;">Name: Broken Twill Weave</div><div class="t" style="left:1013px;transform:translateX(-50%) scaleX(1.0);top:299.41px;font-size:12px;line-height:12px;font-weight:400;color:#000;">Shaft: 4</div><div class="t" style="left:1013px;transform:translateX(-50%) scaleX(1.0);top:313.18px;font-size:12px;line-height:12px;font-weight:400;color:#000;">TRADELES: 4</div><div class="t" style="left:1013px;transform:translateX(-50%) scaleX(1.0);top:326.95px;font-size:12px;line-height:12px;font-weight:400;color:#000;">Weft repeat: 0</div><div class="t" style="left:1013px;transform:translateX(-50%) scaleX(1.0);top:340.72px;font-size:12px;line-height:12px;font-weight:400;color:#000;">Warp repeat: 0</div><div class="t" style="left:1013px;transform:translateX(-50%) scaleX(1.0);top:354.49px;font-size:12px;line-height:12px;font-weight:400;color:#000;">Weft float: 0</div><div class="t" style="left:1013px;transform:translateX(-50%) scaleX(1.0);top:368.26px;font-size:12px;line-height:12px;font-weight:400;color:#000;">Warp float: 0</div><div class="t" style="left:1013px;transform:translateX(-50%) scaleX(1.0);top:382.03px;font-size:12px;line-height:12px;font-weight:400;color:#000;">Weave Category: twill</div><div class="t" style="left:1013px;transform:translateX(-50%) scaleX(1.0);top:395.80px;font-size:12px;line-height:12px;font-weight:400;color:#000;">WEAVETYPE: wif</div><div class="t" style="left:1013px;transform:translateX(-50%) scaleX(1.0);top:409.57px;font-size:12px;line-height:12px;font-weight:400;color:#000;">Lift Plan (y/n) : 0</div><div class="t" style="left:1013px;transform:translateX(-50%) scaleX(1.0);top:423.34px;font-size:12px;line-height:12px;font-weight:400;color:#000;">Contains Color (y/n): 0</div><div class="t" style="left:1013px;transform:translateX(-50%) scaleX(1.0);top:437.11px;font-size:12px;line-height:12px;font-weight:400;color:#000;">Used: 0</div><div class="t" style="left:1013px;transform:translateX(-50%) scaleX(1.0);top:450.88px;font-size:12px;line-height:12px;font-weight:400;color:#000;">Permission: Public</div><div class="t" style="left:1013px;transform:translateX(-50%) scaleX(1.0);top:464.65px;font-size:12px;line-height:12px;font-weight:400;color:#000;">By: USER</div><div class="t" style="left:1013px;transform:translateX(-50%) scaleX(1.0);top:478.42px;font-size:12px;line-height:12px;font-weight:400;color:#000;">Date: 2019-02-20 09:50:52.0</div><div style="position:absolute;left:1110px;top:264px;width:187px;height:39px;background:linear-gradient(#c6c9cc,#b7bec7);border:1px solid #858585;box-sizing:border-box"></div><div style="position:absolute;left:1110px;top:303px;width:187px;height:1px;background:#b0b8c0;opacity:0.6"></div><div class="t" style="left:1202.5px;top:276.84px;font-size:12px;line-height:12px;font-weight:700;color:#676c73;">Export</div><svg style="position:absolute;left:1163px;top:264px" width="40" height="40" viewBox="0 0 40 40">
<defs><linearGradient id="pg6230" x1="0" y1="0" x2="1" y2="1"><stop offset="0.55" stop-color="#d8d8da"/><stop offset="1" stop-color="#aecde6"/></linearGradient>
<linearGradient id="ar6230" x1="0" y1="0" x2="1" y2="0"><stop offset="0" stop-color="#3fa8d0"/><stop offset="0.6" stop-color="#8fd4e8"/><stop offset="1" stop-color="#4fb0d8"/></linearGradient></defs>
<rect x="7" y="5" width="19.5" height="28" rx="0.8" fill="url(#pg6230)" stroke="#7a87c8" stroke-width="1.7"/>
<path d="M15 9.8C10.5 12.5 10 19 13.5 20.5L21 20L20.5 17.5L32 15L28.5 26L26 24.5C20 27 13 26.5 11.5 21C10 16 12 12 15 9.8Z" fill="url(#ar6230)"/>
<path d="M15 9.8C11 12.5 10.5 18.5 13.8 20.2" fill="none" stroke="#2d6f96" stroke-width="1" opacity="0.7"/>
</svg><div style="position:absolute;left:1110px;top:306px;width:187px;height:39px;background:linear-gradient(#c6c9cc,#b7bec7);border:1px solid #858585;box-sizing:border-box"></div><div style="position:absolute;left:1110px;top:345px;width:187px;height:1px;background:#b0b8c0;opacity:0.6"></div><div class="t" style="left:1203.3px;top:318.84px;font-size:12px;line-height:12px;font-weight:700;color:#676c73;">Delete</div><svg style="position:absolute;left:1163px;top:306px" width="40" height="40" viewBox="0 0 40 40">
<path d="M14.3 4H21.9V6.8H28V11H8V6.8H14.3Z" fill="#6690c2"/><rect x="16" y="5.5" width="4" height="1" fill="#c8cdd4"/>
<path d="M9.6 13H26.8L26.2 20A8.5 8.5 0 0 0 18.8 34H11.2Z" fill="#6690c2"/>
<circle cx="26.8" cy="28.1" r="7.2" fill="#6690c2"/>
<path d="M23.8 25.1L29.8 31.1M29.8 25.1L23.8 31.1" stroke="#dfe3ea" stroke-width="1.9"/>
</svg><div style="position:absolute;left:1110px;top:348px;width:187px;height:39px;background:linear-gradient(#c6c9cc,#b7bec7);border:1px solid #858585;box-sizing:border-box"></div><div style="position:absolute;left:1110px;top:387px;width:187px;height:1px;background:#b0b8c0;opacity:0.6"></div><div class="t" style="left:1177.5px;top:360.84px;font-size:12px;line-height:12px;font-weight:700;color:#676c73;">Export &amp; Delete</div><svg style="position:absolute;left:1138px;top:348px" width="40" height="40" viewBox="0 0 40 40">
<defs><linearGradient id="ed6230" x1="0" y1="0" x2="1" y2="0"><stop offset="0" stop-color="#7898c8"/><stop offset="1" stop-color="#80c0d8"/></linearGradient></defs>
<path d="M4 7.5C6.5 10 9.5 11 13 10.8L13.5 8.5L23 6.5L19.5 15.3L17.8 12.8C13.5 15.5 7.5 13.5 4 7.5Z" fill="url(#ed6230)"/>
<path d="M11 22.4H17M14 19.4V25.4" stroke="#585858" stroke-width="1.3"/>
<path d="M20 16.2H32.8V18H20Z" fill="#7898c0"/><rect x="24.5" y="15" width="4" height="1.4" rx="0.7" fill="#7898c0"/>
<path d="M20.6 19H31.8V30.5Q31.8 32.8 29.5 32.8H22.9Q20.6 32.8 20.6 30.5Z" fill="#7898c0"/>
<path d="M23.4 21.5V30.5M26.2 21.5V30.5M29 21.5V30.5" stroke="#c6ccd4" stroke-width="0.9"/>
</svg><div style="position:absolute;left:1110px;top:390px;width:187px;height:39px;background:linear-gradient(#c6c9cc,#b7bec7);border:1px solid #858585;box-sizing:border-box"></div><div style="position:absolute;left:1110px;top:429px;width:187px;height:1px;background:#b0b8c0;opacity:0.6"></div><div class="t" style="left:1165.2px;top:402.84px;font-size:12px;line-height:12px;font-weight:700;color:#676c73;">Change Permission</div><svg style="position:absolute;left:1123px;top:390px" width="40" height="40" viewBox="0 0 40 40">
<polygon points="31.91,19.88 34.54,22.02 33.96,23.70 30.58,23.80 29.81,24.95 31.02,28.12 29.68,29.29 26.70,27.68 25.46,28.29 24.92,31.64 23.18,31.98 21.40,29.10 20.02,29.01 17.88,31.64 16.20,31.06 16.10,27.68 14.95,26.91 11.78,28.12 10.61,26.78 12.22,23.80 11.61,22.56 8.26,22.02 7.92,20.28 10.80,18.50 10.89,17.12 8.26,14.98 8.84,13.30 12.22,13.20 12.99,12.05 11.78,8.88 13.12,7.71 16.10,9.32 17.34,8.71 17.88,5.36 19.62,5.02 21.40,7.90 22.78,7.99 24.92,5.36 26.60,5.94 26.70,9.32 27.85,10.09 31.02,8.88 32.19,10.22 30.58,13.20 31.19,14.44 34.54,14.98 34.88,16.72 32.00,18.50" fill="#6090cc"/>
<circle cx="21.4" cy="18.5" r="7.6" fill="#cfd3d8"/><circle cx="21.4" cy="18.5" r="5.2" fill="#6090cc"/><circle cx="21.4" cy="18.5" r="4" fill="#d2d4d8"/>
</svg><div style="position:absolute;left:1110px;top:432px;width:187px;height:39px;background:linear-gradient(#eef3f9,#dfe8f2 50%,#c9dbec);border:1px solid #505050;box-sizing:border-box"></div><div style="position:absolute;left:1110px;top:471px;width:187px;height:1px;background:#b0b8c0;opacity:0.6"></div><div class="t" style="left:1206.9px;top:444.84px;font-size:12px;line-height:12px;font-weight:700;color:#000;">Copy</div><svg style="position:absolute;left:1163px;top:432px" width="40" height="40" viewBox="0 0 40 40">
<defs><linearGradient id="cp6230" x1="0" y1="0" x2="1" y2="1"><stop offset="0.5" stop-color="#fff"/><stop offset="1" stop-color="#a8d0f8"/></linearGradient></defs>
<path d="M19 5.2H32.5L35.8 8.5V28.2H19Z" fill="url(#cp6230)" stroke="#0a18b8" stroke-width="1.5"/>
<path d="M32.2 5.2V8.8H35.8Z" fill="#0a18b8"/>
<path d="M11.3 9.3H25.3L28.7 12.6V32.6H11.3Z" fill="url(#cp6230)" stroke="#0a18b8" stroke-width="1.5"/>
<path d="M25 9.3V12.9H28.7Z" fill="#0a18b8"/>
</svg><div style="position:absolute;left:1110px;top:474px;width:187px;height:39px;background:linear-gradient(#eef3f9,#dfe8f2 50%,#c9dbec);border:1px solid #505050;box-sizing:border-box"></div><div style="position:absolute;left:1110px;top:513px;width:187px;height:1px;background:#b0b8c0;opacity:0.6"></div><div class="t" style="left:1157.3px;top:486.84px;font-size:12px;line-height:12px;font-weight:700;color:#000;">Fabric Creator (Editor)</div><svg style="position:absolute;left:1118px;top:474px" width="40" height="40" viewBox="0 0 40 40">
<defs><pattern id="fd6230" width="5" height="5" patternUnits="userSpaceOnUse" x="6" y="6"><circle cx="2" cy="2" r="0.65" fill="#2e6f8e"/><circle cx="4.5" cy="4.5" r="0.55" fill="#3a88a8"/></pattern></defs>
<rect x="5.5" y="5.2" width="18" height="26.5" fill="#4cc8f0" stroke="#3a3a3a" stroke-width="1" stroke-dasharray="1.3 1.1"/>
<rect x="6" y="5.7" width="17" height="25.5" fill="url(#fd6230)"/>
<path d="M25 13.8L31.8 7.5L31.8 14.2L28.4 17.6Z" fill="#1a1a1a"/>
<path d="M17.2 22.2L25 13.8L28.4 17.6L19.6 24.6Z" fill="#f2c9a0"/>
<path d="M14.2 27.2L17.2 22.2L19.6 24.6Z" fill="#1e1e1e"/>
</svg><svg style="position:absolute;left:71px;top:546px" width="222" height="222" viewBox="0 0 300 300"><rect width="300" height="300" fill="#868686"/><path fill="#000" d="M12 2.8h8v8h-8zM52 2.8h8v8h-8zM72 2.8h8v8h-8zM112 2.8h8v8h-8zM132 2.8h8v8h-8zM172 2.8h8v8h-8zM192 2.8h8v8h-8zM232 2.8h8v8h-8zM252 2.8h8v8h-8zM292 2.8h8v8h-8zM22 12.8h8v8h-8zM42 12.8h8v8h-8zM82 12.8h8v8h-8zM102 12.8h8v8h-8zM142 12.8h8v8h-8zM162 12.8h8v8h-8zM202 12.8h8v8h-8zM222 12.8h8v8h-8zM262 12.8h8v8h-8zM282 12.8h8v8h-8zM32 22.8h8v8h-8zM92 22.8h8v8h-8zM152 22.8h8v8h-8zM212 22.8h8v8h-8zM272 22.8h8v8h-8zM22 32.8h8v8h-8zM42 32.8h8v8h-8zM82 32.8h8v8h-8zM102 32.8h8v8h-8zM142 32.8h8v8h-8zM162 32.8h8v8h-8zM202 32.8h8v8h-8zM222 32.8h8v8h-8zM262 32.8h8v8h-8zM282 32.8h8v8h-8zM12 42.8h8v8h-8zM52 42.8h8v8h-8zM72 42.8h8v8h-8zM112 42.8h8v8h-8zM132 42.8h8v8h-8zM172 42.8h8v8h-8zM192 42.8h8v8h-8zM232 42.8h8v8h-8zM252 42.8h8v8h-8zM292 42.8h8v8h-8zM2 52.8h8v8h-8zM62 52.8h8v8h-8zM122 52.8h8v8h-8zM182 52.8h8v8h-8zM242 52.8h8v8h-8zM12 62.8h8v8h-8zM52 62.8h8v8h-8zM72 62.8h8v8h-8zM112 62.8h8v8h-8zM132 62.8h8v8h-8zM172 62.8h8v8h-8zM192 62.8h8v8h-8zM232 62.8h8v8h-8zM252 62.8h8v8h-8zM292 62.8h8v8h-8zM22 72.8h8v8h-8zM42 72.8h8v8h-8zM82 72.8h8v8h-8zM102 72.8h8v8h-8zM142 72.8h8v8h-8zM162 72.8h8v8h-8zM202 72.8h8v8h-8zM222 72.8h8v8h-8zM262 72.8h8v8h-8zM282 72.8h8v8h-8zM32 82.8h8v8h-8zM92 82.8h8v8h-8zM152 82.8h8v8h-8zM212 82.8h8v8h-8zM272 82.8h8v8h-8zM22 92.8h8v8h-8zM42 92.8h8v8h-8zM82 92.8h8v8h-8zM102 92.8h8v8h-8zM142 92.8h8v8h-8zM162 92.8h8v8h-8zM202 92.8h8v8h-8zM222 92.8h8v8h-8zM262 92.8h8v8h-8zM282 92.8h8v8h-8zM12 102.8h8v8h-8zM52 102.8h8v8h-8zM72 102.8h8v8h-8zM112 102.8h8v8h-8zM132 102.8h8v8h-8zM172 102.8h8v8h-8zM192 102.8h8v8h-8zM232 102.8h8v8h-8zM252 102.8h8v8h-8zM292 102.8h8v8h-8zM2 112.8h8v8h-8zM62 112.8h8v8h-8zM122 112.8h8v8h-8zM182 112.8h8v8h-8zM242 112.8h8v8h-8zM12 122.8h8v8h-8zM52 122.8h8v8h-8zM72 122.8h8v8h-8zM112 122.8h8v8h-8zM132 122.8h8v8h-8zM172 122.8h8v8h-8zM192 122.8h8v8h-8zM232 122.8h8v8h-8zM252 122.8h8v8h-8zM292 122.8h8v8h-8zM22 132.8h8v8h-8zM42 132.8h8v8h-8zM82 132.8h8v8h-8zM102 132.8h8v8h-8zM142 132.8h8v8h-8zM162 132.8h8v8h-8zM202 132.8h8v8h-8zM222 132.8h8v8h-8zM262 132.8h8v8h-8zM282 132.8h8v8h-8zM32 142.8h8v8h-8zM92 142.8h8v8h-8zM152 142.8h8v8h-8zM212 142.8h8v8h-8zM272 142.8h8v8h-8zM22 152.8h8v8h-8zM42 152.8h8v8h-8zM82 152.8h8v8h-8zM102 152.8h8v8h-8zM142 152.8h8v8h-8zM162 152.8h8v8h-8zM202 152.8h8v8h-8zM222 152.8h8v8h-8zM262 152.8h8v8h-8zM282 152.8h8v8h-8zM12 162.8h8v8h-8zM52 162.8h8v8h-8zM72 162.8h8v8h-8zM112 162.8h8v8h-8zM132 162.8h8v8h-8zM172 162.8h8v8h-8zM192 162.8h8v8h-8zM232 162.8h8v8h-8zM252 162.8h8v8h-8zM292 162.8h8v8h-8zM2 172.8h8v8h-8zM62 172.8h8v8h-8zM122 172.8h8v8h-8zM182 172.8h8v8h-8zM242 172.8h8v8h-8zM12 182.8h8v8h-8zM52 182.8h8v8h-8zM72 182.8h8v8h-8zM112 182.8h8v8h-8zM132 182.8h8v8h-8zM172 182.8h8v8h-8zM192 182.8h8v8h-8zM232 182.8h8v8h-8zM252 182.8h8v8h-8zM292 182.8h8v8h-8zM22 192.8h8v8h-8zM42 192.8h8v8h-8zM82 192.8h8v8h-8zM102 192.8h8v8h-8zM142 192.8h8v8h-8zM162 192.8h8v8h-8zM202 192.8h8v8h-8zM222 192.8h8v8h-8zM262 192.8h8v8h-8zM282 192.8h8v8h-8zM32 202.8h8v8h-8zM92 202.8h8v8h-8zM152 202.8h8v8h-8zM212 202.8h8v8h-8zM272 202.8h8v8h-8zM22 212.8h8v8h-8zM42 212.8h8v8h-8zM82 212.8h8v8h-8zM102 212.8h8v8h-8zM142 212.8h8v8h-8zM162 212.8h8v8h-8zM202 212.8h8v8h-8zM222 212.8h8v8h-8zM262 212.8h8v8h-8zM282 212.8h8v8h-8zM12 222.8h8v8h-8zM52 222.8h8v8h-8zM72 222.8h8v8h-8zM112 222.8h8v8h-8zM132 222.8h8v8h-8zM172 222.8h8v8h-8zM192 222.8h8v8h-8zM232 222.8h8v8h-8zM252 222.8h8v8h-8zM292 222.8h8v8h-8zM2 232.8h8v8h-8zM62 232.8h8v8h-8zM122 232.8h8v8h-8zM182 232.8h8v8h-8zM242 232.8h8v8h-8zM12 242.8h8v8h-8zM52 242.8h8v8h-8zM72 242.8h8v8h-8zM112 242.8h8v8h-8zM132 242.8h8v8h-8zM172 242.8h8v8h-8zM192 242.8h8v8h-8zM232 242.8h8v8h-8zM252 242.8h8v8h-8zM292 242.8h8v8h-8zM22 252.8h8v8h-8zM42 252.8h8v8h-8zM82 252.8h8v8h-8zM102 252.8h8v8h-8zM142 252.8h8v8h-8zM162 252.8h8v8h-8zM202 252.8h8v8h-8zM222 252.8h8v8h-8zM262 252.8h8v8h-8zM282 252.8h8v8h-8zM32 262.8h8v8h-8zM92 262.8h8v8h-8zM152 262.8h8v8h-8zM212 262.8h8v8h-8zM272 262.8h8v8h-8zM22 272.8h8v8h-8zM42 272.8h8v8h-8zM82 272.8h8v8h-8zM102 272.8h8v8h-8zM142 272.8h8v8h-8zM162 272.8h8v8h-8zM202 272.8h8v8h-8zM222 272.8h8v8h-8zM262 272.8h8v8h-8zM282 272.8h8v8h-8zM12 282.8h8v8h-8zM52 282.8h8v8h-8zM72 282.8h8v8h-8zM112 282.8h8v8h-8zM132 282.8h8v8h-8zM172 282.8h8v8h-8zM192 282.8h8v8h-8zM232 282.8h8v8h-8zM252 282.8h8v8h-8zM292 282.8h8v8h-8zM2 292.8h8v8h-8zM62 292.8h8v8h-8zM122 292.8h8v8h-8zM182 292.8h8v8h-8zM242 292.8h8v8h-8z"/><path fill="#fff" d="M2 2.8h8v8h-8zM22 2.8h8v8h-8zM32 2.8h8v8h-8zM42 2.8h8v8h-8zM62 2.8h8v8h-8zM82 2.8h8v8h-8zM92 2.8h8v8h-8zM102 2.8h8v8h-8zM122 2.8h8v8h-8zM142 2.8h8v8h-8zM152 2.8h8v8h-8zM162 2.8h8v8h-8zM182 2.8h8v8h-8zM202 2.8h8v8h-8zM212 2.8h8v8h-8zM222 2.8h8v8h-8zM242 2.8h8v8h-8zM262 2.8h8v8h-8zM272 2.8h8v8h-8zM282 2.8h8v8h-8zM2 12.8h8v8h-8zM12 12.8h8v8h-8zM32 12.8h8v8h-8zM52 12.8h8v8h-8zM62 12.8h8v8h-8zM72 12.8h8v8h-8zM92 12.8h8v8h-8zM112 12.8h8v8h-8zM122 12.8h8v8h-8zM132 12.8h8v8h-8zM152 12.8h8v8h-8zM172 12.8h8v8h-8zM182 12.8h8v8h-8zM192 12.8h8v8h-8zM212 12.8h8v8h-8zM232 12.8h8v8h-8zM242 12.8h8v8h-8zM252 12.8h8v8h-8zM272 12.8h8v8h-8zM292 12.8h8v8h-8zM2 22.8h8v8h-8zM12 22.8h8v8h-8zM22 22.8h8v8h-8zM42 22.8h8v8h-8zM52 22.8h8v8h-8zM62 22.8h8v8h-8zM72 22.8h8v8h-8zM82 22.8h8v8h-8zM102 22.8h8v8h-8zM112 22.8h8v8h-8zM122 22.8h8v8h-8zM132 22.8h8v8h-8zM142 22.8h8v8h-8zM162 22.8h8v8h-8zM172 22.8h8v8h-8zM182 22.8h8v8h-8zM192 22.8h8v8h-8zM202 22.8h8v8h-8zM222 22.8h8v8h-8zM232 22.8h8v8h-8zM242 22.8h8v8h-8zM252 22.8h8v8h-8zM262 22.8h8v8h-8zM282 22.8h8v8h-8zM292 22.8h8v8h-8zM2 32.8h8v8h-8zM12 32.8h8v8h-8zM32 32.8h8v8h-8zM52 32.8h8v8h-8zM62 32.8h8v8h-8zM72 32.8h8v8h-8zM92 32.8h8v8h-8zM112 32.8h8v8h-8zM122 32.8h8v8h-8zM132 32.8h8v8h-8zM152 32.8h8v8h-8zM172 32.8h8v8h-8zM182 32.8h8v8h-8zM192 32.8h8v8h-8zM212 32.8h8v8h-8zM232 32.8h8v8h-8zM242 32.8h8v8h-8zM252 32.8h8v8h-8zM272 32.8h8v8h-8zM292 32.8h8v8h-8zM2 42.8h8v8h-8zM22 42.8h8v8h-8zM32 42.8h8v8h-8zM42 42.8h8v8h-8zM62 42.8h8v8h-8zM82 42.8h8v8h-8zM92 42.8h8v8h-8zM102 42.8h8v8h-8zM122 42.8h8v8h-8zM142 42.8h8v8h-8zM152 42.8h8v8h-8zM162 42.8h8v8h-8zM182 42.8h8v8h-8zM202 42.8h8v8h-8zM212 42.8h8v8h-8zM222 42.8h8v8h-8zM242 42.8h8v8h-8zM262 42.8h8v8h-8zM272 42.8h8v8h-8zM282 42.8h8v8h-8zM12 52.8h8v8h-8zM22 52.8h8v8h-8zM32 52.8h8v8h-8zM42 52.8h8v8h-8zM52 52.8h8v8h-8zM72 52.8h8v8h-8zM82 52.8h8v8h-8zM92 52.8h8v8h-8zM102 52.8h8v8h-8zM112 52.8h8v8h-8zM132 52.8h8v8h-8zM142 52.8h8v8h-8zM152 52.8h8v8h-8zM162 52.8h8v8h-8zM172 52.8h8v8h-8zM192 52.8h8v8h-8zM202 52.8h8v8h-8zM212 52.8h8v8h-8zM222 52.8h8v8h-8zM232 52.8h8v8h-8zM252 52.8h8v8h-8zM262 52.8h8v8h-8zM272 52.8h8v8h-8zM282 52.8h8v8h-8zM292 52.8h8v8h-8zM2 62.8h8v8h-8zM22 62.8h8v8h-8zM32 62.8h8v8h-8zM42 62.8h8v8h-8zM62 62.8h8v8h-8zM82 62.8h8v8h-8zM92 62.8h8v8h-8zM102 62.8h8v8h-8zM122 62.8h8v8h-8zM142 62.8h8v8h-8zM152 62.8h8v8h-8zM162 62.8h8v8h-8zM182 62.8h8v8h-8zM202 62.8h8v8h-8zM212 62.8h8v8h-8zM222 62.8h8v8h-8zM242 62.8h8v8h-8zM262 62.8h8v8h-8zM272 62.8h8v8h-8zM282 62.8h8v8h-8zM2 72.8h8v8h-8zM12 72.8h8v8h-8zM32 72.8h8v8h-8zM52 72.8h8v8h-8zM62 72.8h8v8h-8zM72 72.8h8v8h-8zM92 72.8h8v8h-8zM112 72.8h8v8h-8zM122 72.8h8v8h-8zM132 72.8h8v8h-8zM152 72.8h8v8h-8zM172 72.8h8v8h-8zM182 72.8h8v8h-8zM192 72.8h8v8h-8zM212 72.8h8v8h-8zM232 72.8h8v8h-8zM242 72.8h8v8h-8zM252 72.8h8v8h-8zM272 72.8h8v8h-8zM292 72.8h8v8h-8zM2 82.8h8v8h-8zM12 82.8h8v8h-8zM22 82.8h8v8h-8zM42 82.8h8v8h-8zM52 82.8h8v8h-8zM62 82.8h8v8h-8zM72 82.8h8v8h-8zM82 82.8h8v8h-8zM102 82.8h8v8h-8zM112 82.8h8v8h-8zM122 82.8h8v8h-8zM132 82.8h8v8h-8zM142 82.8h8v8h-8zM162 82.8h8v8h-8zM172 82.8h8v8h-8zM182 82.8h8v8h-8zM192 82.8h8v8h-8zM202 82.8h8v8h-8zM222 82.8h8v8h-8zM232 82.8h8v8h-8zM242 82.8h8v8h-8zM252 82.8h8v8h-8zM262 82.8h8v8h-8zM282 82.8h8v8h-8zM292 82.8h8v8h-8zM2 92.8h8v8h-8zM12 92.8h8v8h-8zM32 92.8h8v8h-8zM52 92.8h8v8h-8zM62 92.8h8v8h-8zM72 92.8h8v8h-8zM92 92.8h8v8h-8zM112 92.8h8v8h-8zM122 92.8h8v8h-8zM132 92.8h8v8h-8zM152 92.8h8v8h-8zM172 92.8h8v8h-8zM182 92.8h8v8h-8zM192 92.8h8v8h-8zM212 92.8h8v8h-8zM232 92.8h8v8h-8zM242 92.8h8v8h-8zM252 92.8h8v8h-8zM272 92.8h8v8h-8zM292 92.8h8v8h-8zM2 102.8h8v8h-8zM22 102.8h8v8h-8zM32 102.8h8v8h-8zM42 102.8h8v8h-8zM62 102.8h8v8h-8zM82 102.8h8v8h-8zM92 102.8h8v8h-8zM102 102.8h8v8h-8zM122 102.8h8v8h-8zM142 102.8h8v8h-8zM152 102.8h8v8h-8zM162 102.8h8v8h-8zM182 102.8h8v8h-8zM202 102.8h8v8h-8zM212 102.8h8v8h-8zM222 102.8h8v8h-8zM242 102.8h8v8h-8zM262 102.8h8v8h-8zM272 102.8h8v8h-8zM282 102.8h8v8h-8zM12 112.8h8v8h-8zM22 112.8h8v8h-8zM32 112.8h8v8h-8zM42 112.8h8v8h-8zM52 112.8h8v8h-8zM72 112.8h8v8h-8zM82 112.8h8v8h-8zM92 112.8h8v8h-8zM102 112.8h8v8h-8zM112 112.8h8v8h-8zM132 112.8h8v8h-8zM142 112.8h8v8h-8zM152 112.8h8v8h-8zM162 112.8h8v8h-8zM172 112.8h8v8h-8zM192 112.8h8v8h-8zM202 112.8h8v8h-8zM212 112.8h8v8h-8zM222 112.8h8v8h-8zM232 112.8h8v8h-8zM252 112.8h8v8h-8zM262 112.8h8v8h-8zM272 112.8h8v8h-8zM282 112.8h8v8h-8zM292 112.8h8v8h-8zM2 122.8h8v8h-8zM22 122.8h8v8h-8zM32 122.8h8v8h-8zM42 122.8h8v8h-8zM62 122.8h8v8h-8zM82 122.8h8v8h-8zM92 122.8h8v8h-8zM102 122.8h8v8h-8zM122 122.8h8v8h-8zM142 122.8h8v8h-8zM152 122.8h8v8h-8zM162 122.8h8v8h-8zM182 122.8h8v8h-8zM202 122.8h8v8h-8zM212 122.8h8v8h-8zM222 122.8h8v8h-8zM242 122.8h8v8h-8zM262 122.8h8v8h-8zM272 122.8h8v8h-8zM282 122.8h8v8h-8zM2 132.8h8v8h-8zM12 132.8h8v8h-8zM32 132.8h8v8h-8zM52 132.8h8v8h-8zM62 132.8h8v8h-8zM72 132.8h8v8h-8zM92 132.8h8v8h-8zM112 132.8h8v8h-8zM122 132.8h8v8h-8zM132 132.8h8v8h-8zM152 132.8h8v8h-8zM172 132.8h8v8h-8zM182 132.8h8v8h-8zM192 132.8h8v8h-8zM212 132.8h8v8h-8zM232 132.8h8v8h-8zM242 132.8h8v8h-8zM252 132.8h8v8h-8zM272 132.8h8v8h-8zM292 132.8h8v8h-8zM2 142.8h8v8h-8zM12 142.8h8v8h-8zM22 142.8h8v8h-8zM42 142.8h8v8h-8zM52 142.8h8v8h-8zM62 142.8h8v8h-8zM72 142.8h8v8h-8zM82 142.8h8v8h-8zM102 142.8h8v8h-8zM112 142.8h8v8h-8zM122 142.8h8v8h-8zM132 142.8h8v8h-8zM142 142.8h8v8h-8zM162 142.8h8v8h-8zM172 142.8h8v8h-8zM182 142.8h8v8h-8zM192 142.8h8v8h-8zM202 142.8h8v8h-8zM222 142.8h8v8h-8zM232 142.8h8v8h-8zM242 142.8h8v8h-8zM252 142.8h8v8h-8zM262 142.8h8v8h-8zM282 142.8h8v8h-8zM292 142.8h8v8h-8zM2 152.8h8v8h-8zM12 152.8h8v8h-8zM32 152.8h8v8h-8zM52 152.8h8v8h-8zM62 152.8h8v8h-8zM72 152.8h8v8h-8zM92 152.8h8v8h-8zM112 152.8h8v8h-8zM122 152.8h8v8h-8zM132 152.8h8v8h-8zM152 152.8h8v8h-8zM172 152.8h8v8h-8zM182 152.8h8v8h-8zM192 152.8h8v8h-8zM212 152.8h8v8h-8zM232 152.8h8v8h-8zM242 152.8h8v8h-8zM252 152.8h8v8h-8zM272 152.8h8v8h-8zM292 152.8h8v8h-8zM2 162.8h8v8h-8zM22 162.8h8v8h-8zM32 162.8h8v8h-8zM42 162.8h8v8h-8zM62 162.8h8v8h-8zM82 162.8h8v8h-8zM92 162.8h8v8h-8zM102 162.8h8v8h-8zM122 162.8h8v8h-8zM142 162.8h8v8h-8zM152 162.8h8v8h-8zM162 162.8h8v8h-8zM182 162.8h8v8h-8zM202 162.8h8v8h-8zM212 162.8h8v8h-8zM222 162.8h8v8h-8zM242 162.8h8v8h-8zM262 162.8h8v8h-8zM272 162.8h8v8h-8zM282 162.8h8v8h-8zM12 172.8h8v8h-8zM22 172.8h8v8h-8zM32 172.8h8v8h-8zM42 172.8h8v8h-8zM52 172.8h8v8h-8zM72 172.8h8v8h-8zM82 172.8h8v8h-8zM92 172.8h8v8h-8zM102 172.8h8v8h-8zM112 172.8h8v8h-8zM132 172.8h8v8h-8zM142 172.8h8v8h-8zM152 172.8h8v8h-8zM162 172.8h8v8h-8zM172 172.8h8v8h-8zM192 172.8h8v8h-8zM202 172.8h8v8h-8zM212 172.8h8v8h-8zM222 172.8h8v8h-8zM232 172.8h8v8h-8zM252 172.8h8v8h-8zM262 172.8h8v8h-8zM272 172.8h8v8h-8zM282 172.8h8v8h-8zM292 172.8h8v8h-8zM2 182.8h8v8h-8zM22 182.8h8v8h-8zM32 182.8h8v8h-8zM42 182.8h8v8h-8zM62 182.8h8v8h-8zM82 182.8h8v8h-8zM92 182.8h8v8h-8zM102 182.8h8v8h-8zM122 182.8h8v8h-8zM142 182.8h8v8h-8zM152 182.8h8v8h-8zM162 182.8h8v8h-8zM182 182.8h8v8h-8zM202 182.8h8v8h-8zM212 182.8h8v8h-8zM222 182.8h8v8h-8zM242 182.8h8v8h-8zM262 182.8h8v8h-8zM272 182.8h8v8h-8zM282 182.8h8v8h-8zM2 192.8h8v8h-8zM12 192.8h8v8h-8zM32 192.8h8v8h-8zM52 192.8h8v8h-8zM62 192.8h8v8h-8zM72 192.8h8v8h-8zM92 192.8h8v8h-8zM112 192.8h8v8h-8zM122 192.8h8v8h-8zM132 192.8h8v8h-8zM152 192.8h8v8h-8zM172 192.8h8v8h-8zM182 192.8h8v8h-8zM192 192.8h8v8h-8zM212 192.8h8v8h-8zM232 192.8h8v8h-8zM242 192.8h8v8h-8zM252 192.8h8v8h-8zM272 192.8h8v8h-8zM292 192.8h8v8h-8zM2 202.8h8v8h-8zM12 202.8h8v8h-8zM22 202.8h8v8h-8zM42 202.8h8v8h-8zM52 202.8h8v8h-8zM62 202.8h8v8h-8zM72 202.8h8v8h-8zM82 202.8h8v8h-8zM102 202.8h8v8h-8zM112 202.8h8v8h-8zM122 202.8h8v8h-8zM132 202.8h8v8h-8zM142 202.8h8v8h-8zM162 202.8h8v8h-8zM172 202.8h8v8h-8zM182 202.8h8v8h-8zM192 202.8h8v8h-8zM202 202.8h8v8h-8zM222 202.8h8v8h-8zM232 202.8h8v8h-8zM242 202.8h8v8h-8zM252 202.8h8v8h-8zM262 202.8h8v8h-8zM282 202.8h8v8h-8zM292 202.8h8v8h-8zM2 212.8h8v8h-8zM12 212.8h8v8h-8zM32 212.8h8v8h-8zM52 212.8h8v8h-8zM62 212.8h8v8h-8zM72 212.8h8v8h-8zM92 212.8h8v8h-8zM112 212.8h8v8h-8zM122 212.8h8v8h-8zM132 212.8h8v8h-8zM152 212.8h8v8h-8zM172 212.8h8v8h-8zM182 212.8h8v8h-8zM192 212.8h8v8h-8zM212 212.8h8v8h-8zM232 212.8h8v8h-8zM242 212.8h8v8h-8zM252 212.8h8v8h-8zM272 212.8h8v8h-8zM292 212.8h8v8h-8zM2 222.8h8v8h-8zM22 222.8h8v8h-8zM32 222.8h8v8h-8zM42 222.8h8v8h-8zM62 222.8h8v8h-8zM82 222.8h8v8h-8zM92 222.8h8v8h-8zM102 222.8h8v8h-8zM122 222.8h8v8h-8zM142 222.8h8v8h-8zM152 222.8h8v8h-8zM162 222.8h8v8h-8zM182 222.8h8v8h-8zM202 222.8h8v8h-8zM212 222.8h8v8h-8zM222 222.8h8v8h-8zM242 222.8h8v8h-8zM262 222.8h8v8h-8zM272 222.8h8v8h-8zM282 222.8h8v8h-8zM12 232.8h8v8h-8zM22 232.8h8v8h-8zM32 232.8h8v8h-8zM42 232.8h8v8h-8zM52 232.8h8v8h-8zM72 232.8h8v8h-8zM82 232.8h8v8h-8zM92 232.8h8v8h-8zM102 232.8h8v8h-8zM112 232.8h8v8h-8zM132 232.8h8v8h-8zM142 232.8h8v8h-8zM152 232.8h8v8h-8zM162 232.8h8v8h-8zM172 232.8h8v8h-8zM192 232.8h8v8h-8zM202 232.8h8v8h-8zM212 232.8h8v8h-8zM222 232.8h8v8h-8zM232 232.8h8v8h-8zM252 232.8h8v8h-8zM262 232.8h8v8h-8zM272 232.8h8v8h-8zM282 232.8h8v8h-8zM292 232.8h8v8h-8zM2 242.8h8v8h-8zM22 242.8h8v8h-8zM32 242.8h8v8h-8zM42 242.8h8v8h-8zM62 242.8h8v8h-8zM82 242.8h8v8h-8zM92 242.8h8v8h-8zM102 242.8h8v8h-8zM122 242.8h8v8h-8zM142 242.8h8v8h-8zM152 242.8h8v8h-8zM162 242.8h8v8h-8zM182 242.8h8v8h-8zM202 242.8h8v8h-8zM212 242.8h8v8h-8zM222 242.8h8v8h-8zM242 242.8h8v8h-8zM262 242.8h8v8h-8zM272 242.8h8v8h-8zM282 242.8h8v8h-8zM2 252.8h8v8h-8zM12 252.8h8v8h-8zM32 252.8h8v8h-8zM52 252.8h8v8h-8zM62 252.8h8v8h-8zM72 252.8h8v8h-8zM92 252.8h8v8h-8zM112 252.8h8v8h-8zM122 252.8h8v8h-8zM132 252.8h8v8h-8zM152 252.8h8v8h-8zM172 252.8h8v8h-8zM182 252.8h8v8h-8zM192 252.8h8v8h-8zM212 252.8h8v8h-8zM232 252.8h8v8h-8zM242 252.8h8v8h-8zM252 252.8h8v8h-8zM272 252.8h8v8h-8zM292 252.8h8v8h-8zM2 262.8h8v8h-8zM12 262.8h8v8h-8zM22 262.8h8v8h-8zM42 262.8h8v8h-8zM52 262.8h8v8h-8zM62 262.8h8v8h-8zM72 262.8h8v8h-8zM82 262.8h8v8h-8zM102 262.8h8v8h-8zM112 262.8h8v8h-8zM122 262.8h8v8h-8zM132 262.8h8v8h-8zM142 262.8h8v8h-8zM162 262.8h8v8h-8zM172 262.8h8v8h-8zM182 262.8h8v8h-8zM192 262.8h8v8h-8zM202 262.8h8v8h-8zM222 262.8h8v8h-8zM232 262.8h8v8h-8zM242 262.8h8v8h-8zM252 262.8h8v8h-8zM262 262.8h8v8h-8zM282 262.8h8v8h-8zM292 262.8h8v8h-8zM2 272.8h8v8h-8zM12 272.8h8v8h-8zM32 272.8h8v8h-8zM52 272.8h8v8h-8zM62 272.8h8v8h-8zM72 272.8h8v8h-8zM92 272.8h8v8h-8zM112 272.8h8v8h-8zM122 272.8h8v8h-8zM132 272.8h8v8h-8zM152 272.8h8v8h-8zM172 272.8h8v8h-8zM182 272.8h8v8h-8zM192 272.8h8v8h-8zM212 272.8h8v8h-8zM232 272.8h8v8h-8zM242 272.8h8v8h-8zM252 272.8h8v8h-8zM272 272.8h8v8h-8zM292 272.8h8v8h-8zM2 282.8h8v8h-8zM22 282.8h8v8h-8zM32 282.8h8v8h-8zM42 282.8h8v8h-8zM62 282.8h8v8h-8zM82 282.8h8v8h-8zM92 282.8h8v8h-8zM102 282.8h8v8h-8zM122 282.8h8v8h-8zM142 282.8h8v8h-8zM152 282.8h8v8h-8zM162 282.8h8v8h-8zM182 282.8h8v8h-8zM202 282.8h8v8h-8zM212 282.8h8v8h-8zM222 282.8h8v8h-8zM242 282.8h8v8h-8zM262 282.8h8v8h-8zM272 282.8h8v8h-8zM282 282.8h8v8h-8zM12 292.8h8v8h-8zM22 292.8h8v8h-8zM32 292.8h8v8h-8zM42 292.8h8v8h-8zM52 292.8h8v8h-8zM72 292.8h8v8h-8zM82 292.8h8v8h-8zM92 292.8h8v8h-8zM102 292.8h8v8h-8zM112 292.8h8v8h-8zM132 292.8h8v8h-8zM142 292.8h8v8h-8zM152 292.8h8v8h-8zM162 292.8h8v8h-8zM172 292.8h8v8h-8zM192 292.8h8v8h-8zM202 292.8h8v8h-8zM212 292.8h8v8h-8zM222 292.8h8v8h-8zM232 292.8h8v8h-8zM252 292.8h8v8h-8zM262 292.8h8v8h-8zM272 292.8h8v8h-8zM282 292.8h8v8h-8zM292 292.8h8v8h-8z"/></svg><div class="t" style="left:390px;transform:translateX(-50%) scaleX(1.0);top:554.64px;font-size:12px;line-height:12px;font-weight:400;color:#000;">Name: Diamond Weave</div><div class="t" style="left:390px;transform:translateX(-50%) scaleX(1.0);top:568.41px;font-size:12px;line-height:12px;font-weight:400;color:#000;">Shaft: 4</div><div class="t" style="left:390px;transform:translateX(-50%) scaleX(1.0);top:582.18px;font-size:12px;line-height:12px;font-weight:400;color:#000;">TRADELES: 4</div><div class="t" style="left:390px;transform:translateX(-50%) scaleX(1.0);top:595.95px;font-size:12px;line-height:12px;font-weight:400;color:#000;">Weft repeat: 0</div><div class="t" style="left:390px;transform:translateX(-50%) scaleX(1.0);top:609.72px;font-size:12px;line-height:12px;font-weight:400;color:#000;">Warp repeat: 0</div><div class="t" style="left:390px;transform:translateX(-50%) scaleX(1.0);top:623.49px;font-size:12px;line-height:12px;font-weight:400;color:#000;">Weft float: 0</div><div class="t" style="left:390px;transform:translateX(-50%) scaleX(1.0);top:637.26px;font-size:12px;line-height:12px;font-weight:400;color:#000;">Warp float: 0</div><div class="t" style="left:390px;transform:translateX(-50%) scaleX(1.0);top:651.03px;font-size:12px;line-height:12px;font-weight:400;color:#000;">Weave Category: twill</div><div class="t" style="left:390px;transform:translateX(-50%) scaleX(1.0);top:664.80px;font-size:12px;line-height:12px;font-weight:400;color:#000;">WEAVETYPE: wif</div><div class="t" style="left:390px;transform:translateX(-50%) scaleX(1.0);top:678.57px;font-size:12px;line-height:12px;font-weight:400;color:#000;">Lift Plan (y/n) : 0</div><div class="t" style="left:390px;transform:translateX(-50%) scaleX(1.0);top:692.34px;font-size:12px;line-height:12px;font-weight:400;color:#000;">Contains Color (y/n): 0</div><div class="t" style="left:390px;transform:translateX(-50%) scaleX(1.0);top:706.11px;font-size:12px;line-height:12px;font-weight:400;color:#000;">Used: 0</div><div class="t" style="left:390px;transform:translateX(-50%) scaleX(1.0);top:719.88px;font-size:12px;line-height:12px;font-weight:400;color:#000;">Permission: Public</div><div class="t" style="left:390px;transform:translateX(-50%) scaleX(1.0);top:733.65px;font-size:12px;line-height:12px;font-weight:400;color:#000;">By: USER</div><div class="t" style="left:390px;transform:translateX(-50%) scaleX(1.0);top:747.42px;font-size:12px;line-height:12px;font-weight:400;color:#000;">Date: 2019-02-20 09:50:52.0</div><div style="position:absolute;left:487px;top:533px;width:187px;height:39px;background:linear-gradient(#c6c9cc,#b7bec7);border:1px solid #858585;box-sizing:border-box"></div><div style="position:absolute;left:487px;top:572px;width:187px;height:1px;background:#b0b8c0;opacity:0.6"></div><div class="t" style="left:579.5px;top:545.84px;font-size:12px;line-height:12px;font-weight:700;color:#676c73;">Export</div><svg style="position:absolute;left:540px;top:533px" width="40" height="40" viewBox="0 0 40 40">
<defs><linearGradient id="pg0269" x1="0" y1="0" x2="1" y2="1"><stop offset="0.55" stop-color="#d8d8da"/><stop offset="1" stop-color="#aecde6"/></linearGradient>
<linearGradient id="ar0269" x1="0" y1="0" x2="1" y2="0"><stop offset="0" stop-color="#3fa8d0"/><stop offset="0.6" stop-color="#8fd4e8"/><stop offset="1" stop-color="#4fb0d8"/></linearGradient></defs>
<rect x="7" y="5" width="19.5" height="28" rx="0.8" fill="url(#pg0269)" stroke="#7a87c8" stroke-width="1.7"/>
<path d="M15 9.8C10.5 12.5 10 19 13.5 20.5L21 20L20.5 17.5L32 15L28.5 26L26 24.5C20 27 13 26.5 11.5 21C10 16 12 12 15 9.8Z" fill="url(#ar0269)"/>
<path d="M15 9.8C11 12.5 10.5 18.5 13.8 20.2" fill="none" stroke="#2d6f96" stroke-width="1" opacity="0.7"/>
</svg><div style="position:absolute;left:487px;top:575px;width:187px;height:39px;background:linear-gradient(#c6c9cc,#b7bec7);border:1px solid #858585;box-sizing:border-box"></div><div style="position:absolute;left:487px;top:614px;width:187px;height:1px;background:#b0b8c0;opacity:0.6"></div><div class="t" style="left:580.3px;top:587.84px;font-size:12px;line-height:12px;font-weight:700;color:#676c73;">Delete</div><svg style="position:absolute;left:540px;top:575px" width="40" height="40" viewBox="0 0 40 40">
<path d="M14.3 4H21.9V6.8H28V11H8V6.8H14.3Z" fill="#6690c2"/><rect x="16" y="5.5" width="4" height="1" fill="#c8cdd4"/>
<path d="M9.6 13H26.8L26.2 20A8.5 8.5 0 0 0 18.8 34H11.2Z" fill="#6690c2"/>
<circle cx="26.8" cy="28.1" r="7.2" fill="#6690c2"/>
<path d="M23.8 25.1L29.8 31.1M29.8 25.1L23.8 31.1" stroke="#dfe3ea" stroke-width="1.9"/>
</svg><div style="position:absolute;left:487px;top:617px;width:187px;height:39px;background:linear-gradient(#c6c9cc,#b7bec7);border:1px solid #858585;box-sizing:border-box"></div><div style="position:absolute;left:487px;top:656px;width:187px;height:1px;background:#b0b8c0;opacity:0.6"></div><div class="t" style="left:554.5px;top:629.84px;font-size:12px;line-height:12px;font-weight:700;color:#676c73;">Export &amp; Delete</div><svg style="position:absolute;left:515px;top:617px" width="40" height="40" viewBox="0 0 40 40">
<defs><linearGradient id="ed0269" x1="0" y1="0" x2="1" y2="0"><stop offset="0" stop-color="#7898c8"/><stop offset="1" stop-color="#80c0d8"/></linearGradient></defs>
<path d="M4 7.5C6.5 10 9.5 11 13 10.8L13.5 8.5L23 6.5L19.5 15.3L17.8 12.8C13.5 15.5 7.5 13.5 4 7.5Z" fill="url(#ed0269)"/>
<path d="M11 22.4H17M14 19.4V25.4" stroke="#585858" stroke-width="1.3"/>
<path d="M20 16.2H32.8V18H20Z" fill="#7898c0"/><rect x="24.5" y="15" width="4" height="1.4" rx="0.7" fill="#7898c0"/>
<path d="M20.6 19H31.8V30.5Q31.8 32.8 29.5 32.8H22.9Q20.6 32.8 20.6 30.5Z" fill="#7898c0"/>
<path d="M23.4 21.5V30.5M26.2 21.5V30.5M29 21.5V30.5" stroke="#c6ccd4" stroke-width="0.9"/>
</svg><div style="position:absolute;left:487px;top:659px;width:187px;height:39px;background:linear-gradient(#c6c9cc,#b7bec7);border:1px solid #858585;box-sizing:border-box"></div><div style="position:absolute;left:487px;top:698px;width:187px;height:1px;background:#b0b8c0;opacity:0.6"></div><div class="t" style="left:542.2px;top:671.84px;font-size:12px;line-height:12px;font-weight:700;color:#676c73;">Change Permission</div><svg style="position:absolute;left:500px;top:659px" width="40" height="40" viewBox="0 0 40 40">
<polygon points="31.91,19.88 34.54,22.02 33.96,23.70 30.58,23.80 29.81,24.95 31.02,28.12 29.68,29.29 26.70,27.68 25.46,28.29 24.92,31.64 23.18,31.98 21.40,29.10 20.02,29.01 17.88,31.64 16.20,31.06 16.10,27.68 14.95,26.91 11.78,28.12 10.61,26.78 12.22,23.80 11.61,22.56 8.26,22.02 7.92,20.28 10.80,18.50 10.89,17.12 8.26,14.98 8.84,13.30 12.22,13.20 12.99,12.05 11.78,8.88 13.12,7.71 16.10,9.32 17.34,8.71 17.88,5.36 19.62,5.02 21.40,7.90 22.78,7.99 24.92,5.36 26.60,5.94 26.70,9.32 27.85,10.09 31.02,8.88 32.19,10.22 30.58,13.20 31.19,14.44 34.54,14.98 34.88,16.72 32.00,18.50" fill="#6090cc"/>
<circle cx="21.4" cy="18.5" r="7.6" fill="#cfd3d8"/><circle cx="21.4" cy="18.5" r="5.2" fill="#6090cc"/><circle cx="21.4" cy="18.5" r="4" fill="#d2d4d8"/>
</svg><div style="position:absolute;left:487px;top:701px;width:187px;height:39px;background:linear-gradient(#eef3f9,#dfe8f2 50%,#c9dbec);border:1px solid #505050;box-sizing:border-box"></div><div style="position:absolute;left:487px;top:740px;width:187px;height:1px;background:#b0b8c0;opacity:0.6"></div><div class="t" style="left:583.9px;top:713.84px;font-size:12px;line-height:12px;font-weight:700;color:#000;">Copy</div><svg style="position:absolute;left:540px;top:701px" width="40" height="40" viewBox="0 0 40 40">
<defs><linearGradient id="cp0269" x1="0" y1="0" x2="1" y2="1"><stop offset="0.5" stop-color="#fff"/><stop offset="1" stop-color="#a8d0f8"/></linearGradient></defs>
<path d="M19 5.2H32.5L35.8 8.5V28.2H19Z" fill="url(#cp0269)" stroke="#0a18b8" stroke-width="1.5"/>
<path d="M32.2 5.2V8.8H35.8Z" fill="#0a18b8"/>
<path d="M11.3 9.3H25.3L28.7 12.6V32.6H11.3Z" fill="url(#cp0269)" stroke="#0a18b8" stroke-width="1.5"/>
<path d="M25 9.3V12.9H28.7Z" fill="#0a18b8"/>
</svg><div style="position:absolute;left:487px;top:743px;width:187px;height:39px;background:linear-gradient(#eef3f9,#dfe8f2 50%,#c9dbec);border:1px solid #505050;box-sizing:border-box"></div><div style="position:absolute;left:487px;top:782px;width:187px;height:1px;background:#b0b8c0;opacity:0.6"></div><div class="t" style="left:534.3px;top:755.84px;font-size:12px;line-height:12px;font-weight:700;color:#000;">Fabric Creator (Editor)</div><svg style="position:absolute;left:495px;top:743px" width="40" height="40" viewBox="0 0 40 40">
<defs><pattern id="fd0269" width="5" height="5" patternUnits="userSpaceOnUse" x="6" y="6"><circle cx="2" cy="2" r="0.65" fill="#2e6f8e"/><circle cx="4.5" cy="4.5" r="0.55" fill="#3a88a8"/></pattern></defs>
<rect x="5.5" y="5.2" width="18" height="26.5" fill="#4cc8f0" stroke="#3a3a3a" stroke-width="1" stroke-dasharray="1.3 1.1"/>
<rect x="6" y="5.7" width="17" height="25.5" fill="url(#fd0269)"/>
<path d="M25 13.8L31.8 7.5L31.8 14.2L28.4 17.6Z" fill="#1a1a1a"/>
<path d="M17.2 22.2L25 13.8L28.4 17.6L19.6 24.6Z" fill="#f2c9a0"/>
<path d="M14.2 27.2L17.2 22.2L19.6 24.6Z" fill="#1e1e1e"/>
</svg><svg style="position:absolute;left:694px;top:546px" width="222" height="222" viewBox="0 0 300 300"><rect width="300" height="300" fill="#868686"/><path fill="#000" d="M32 2.8h8v8h-8zM42 2.8h8v8h-8zM52 2.8h8v8h-8zM92 2.8h8v8h-8zM102 2.8h8v8h-8zM112 2.8h8v8h-8zM152 2.8h8v8h-8zM162 2.8h8v8h-8zM172 2.8h8v8h-8zM212 2.8h8v8h-8zM222 2.8h8v8h-8zM232 2.8h8v8h-8zM272 2.8h8v8h-8zM282 2.8h8v8h-8zM292 2.8h8v8h-8zM2 12.8h8v8h-8zM42 12.8h8v8h-8zM52 12.8h8v8h-8zM82 12.8h8v8h-8zM92 12.8h8v8h-8zM102 12.8h8v8h-8zM122 12.8h8v8h-8zM162 12.8h8v8h-8zM172 12.8h8v8h-8zM202 12.8h8v8h-8zM212 12.8h8v8h-8zM222 12.8h8v8h-8zM242 12.8h8v8h-8zM282 12.8h8v8h-8zM292 12.8h8v8h-8zM2 22.8h8v8h-8zM12 22.8h8v8h-8zM52 22.8h8v8h-8zM72 22.8h8v8h-8zM82 22.8h8v8h-8zM92 22.8h8v8h-8zM122 22.8h8v8h-8zM132 22.8h8v8h-8zM172 22.8h8v8h-8zM192 22.8h8v8h-8zM202 22.8h8v8h-8zM212 22.8h8v8h-8zM242 22.8h8v8h-8zM252 22.8h8v8h-8zM292 22.8h8v8h-8zM2 32.8h8v8h-8zM12 32.8h8v8h-8zM22 32.8h8v8h-8zM62 32.8h8v8h-8zM72 32.8h8v8h-8zM82 32.8h8v8h-8zM122 32.8h8v8h-8zM132 32.8h8v8h-8zM142 32.8h8v8h-8zM182 32.8h8v8h-8zM192 32.8h8v8h-8zM202 32.8h8v8h-8zM242 32.8h8v8h-8zM252 32.8h8v8h-8zM262 32.8h8v8h-8zM12 42.8h8v8h-8zM22 42.8h8v8h-8zM32 42.8h8v8h-8zM62 42.8h8v8h-8zM72 42.8h8v8h-8zM112 42.8h8v8h-8zM132 42.8h8v8h-8zM142 42.8h8v8h-8zM152 42.8h8v8h-8zM182 42.8h8v8h-8zM192 42.8h8v8h-8zM232 42.8h8v8h-8zM252 42.8h8v8h-8zM262 42.8h8v8h-8zM272 42.8h8v8h-8zM22 52.8h8v8h-8zM32 52.8h8v8h-8zM42 52.8h8v8h-8zM62 52.8h8v8h-8zM102 52.8h8v8h-8zM112 52.8h8v8h-8zM142 52.8h8v8h-8zM152 52.8h8v8h-8zM162 52.8h8v8h-8zM182 52.8h8v8h-8zM222 52.8h8v8h-8zM232 52.8h8v8h-8zM262 52.8h8v8h-8zM272 52.8h8v8h-8zM282 52.8h8v8h-8zM2 62.8h8v8h-8zM12 62.8h8v8h-8zM52 62.8h8v8h-8zM72 62.8h8v8h-8zM82 62.8h8v8h-8zM92 62.8h8v8h-8zM122 62.8h8v8h-8zM132 62.8h8v8h-8zM172 62.8h8v8h-8zM192 62.8h8v8h-8zM202 62.8h8v8h-8zM212 62.8h8v8h-8zM242 62.8h8v8h-8zM252 62.8h8v8h-8zM292 62.8h8v8h-8zM2 72.8h8v8h-8zM42 72.8h8v8h-8zM52 72.8h8v8h-8zM82 72.8h8v8h-8zM92 72.8h8v8h-8zM102 72.8h8v8h-8zM122 72.8h8v8h-8zM162 72.8h8v8h-8zM172 72.8h8v8h-8zM202 72.8h8v8h-8zM212 72.8h8v8h-8zM222 72.8h8v8h-8zM242 72.8h8v8h-8zM282 72.8h8v8h-8zM292 72.8h8v8h-8zM32 82.8h8v8h-8zM42 82.8h8v8h-8zM52 82.8h8v8h-8zM92 82.8h8v8h-8zM102 82.8h8v8h-8zM112 82.8h8v8h-8zM152 82.8h8v8h-8zM162 82.8h8v8h-8zM172 82.8h8v8h-8zM212 82.8h8v8h-8zM222 82.8h8v8h-8zM232 82.8h8v8h-8zM272 82.8h8v8h-8zM282 82.8h8v8h-8zM292 82.8h8v8h-8zM22 92.8h8v8h-8zM32 92.8h8v8h-8zM42 92.8h8v8h-8zM62 92.8h8v8h-8zM102 92.8h8v8h-8zM112 92.8h8v8h-8zM142 92.8h8v8h-8zM152 92.8h8v8h-8zM162 92.8h8v8h-8zM182 92.8h8v8h-8zM222 92.8h8v8h-8zM232 92.8h8v8h-8zM262 92.8h8v8h-8zM272 92.8h8v8h-8zM282 92.8h8v8h-8zM12 102.8h8v8h-8zM22 102.8h8v8h-8zM32 102.8h8v8h-8zM62 102.8h8v8h-8zM72 102.8h8v8h-8zM112 102.8h8v8h-8zM132 102.8h8v8h-8zM142 102.8h8v8h-8zM152 102.8h8v8h-8zM182 102.8h8v8h-8zM192 102.8h8v8h-8zM232 102.8h8v8h-8zM252 102.8h8v8h-8zM262 102.8h8v8h-8zM272 102.8h8v8h-8zM2 112.8h8v8h-8zM12 112.8h8v8h-8zM22 112.8h8v8h-8zM62 112.8h8v8h-8zM72 112.8h8v8h-8zM82 112.8h8v8h-8zM122 112.8h8v8h-8zM132 112.8h8v8h-8zM142 112.8h8v8h-8zM182 112.8h8v8h-8zM192 112.8h8v8h-8zM202 112.8h8v8h-8zM242 112.8h8v8h-8zM252 112.8h8v8h-8zM262 112.8h8v8h-8zM32 122.8h8v8h-8zM42 122.8h8v8h-8zM52 122.8h8v8h-8zM92 122.8h8v8h-8zM102 122.8h8v8h-8zM112 122.8h8v8h-8zM152 122.8h8v8h-8zM162 122.8h8v8h-8zM172 122.8h8v8h-8zM212 122.8h8v8h-8zM222 122.8h8v8h-8zM232 122.8h8v8h-8zM272 122.8h8v8h-8zM282 122.8h8v8h-8zM292 122.8h8v8h-8zM2 132.8h8v8h-8zM42 132.8h8v8h-8zM52 132.8h8v8h-8zM82 132.8h8v8h-8zM92 132.8h8v8h-8zM102 132.8h8v8h-8zM122 132.8h8v8h-8zM162 132.8h8v8h-8zM172 132.8h8v8h-8zM202 132.8h8v8h-8zM212 132.8h8v8h-8zM222 132.8h8v8h-8zM242 132.8h8v8h-8zM282 132.8h8v8h-8zM292 132.8h8v8h-8zM2 142.8h8v8h-8zM12 142.8h8v8h-8zM52 142.8h8v8h-8zM72 142.8h8v8h-8zM82 142.8h8v8h-8zM92 142.8h8v8h-8zM122 142.8h8v8h-8zM132 142.8h8v8h-8zM172 142.8h8v8h-8zM192 142.8h8v8h-8zM202 142.8h8v8h-8zM212 142.8h8v8h-8zM242 142.8h8v8h-8zM252 142.8h8v8h-8zM292 142.8h8v8h-8zM2 152.8h8v8h-8zM12 152.8h8v8h-8zM22 152.8h8v8h-8zM62 152.8h8v8h-8zM72 152.8h8v8h-8zM82 152.8h8v8h-8zM122 152.8h8v8h-8zM132 152.8h8v8h-8zM142 152.8h8v8h-8zM182 152.8h8v8h-8zM192 152.8h8v8h-8zM202 152.8h8v8h-8zM242 152.8h8v8h-8zM252 152.8h8v8h-8zM262 152.8h8v8h-8zM12 162.8h8v8h-8zM22 162.8h8v8h-8zM32 162.8h8v8h-8zM62 162.8h8v8h-8zM72 162.8h8v8h-8zM112 162.8h8v8h-8zM132 162.8h8v8h-8zM142 162.8h8v8h-8zM152 162.8h8v8h-8zM182 162.8h8v8h-8zM192 162.8h8v8h-8zM232 162.8h8v8h-8zM252 162.8h8v8h-8zM262 162.8h8v8h-8zM272 162.8h8v8h-8zM22 172.8h8v8h-8zM32 172.8h8v8h-8zM42 172.8h8v8h-8zM62 172.8h8v8h-8zM102 172.8h8v8h-8zM112 172.8h8v8h-8zM142 172.8h8v8h-8zM152 172.8h8v8h-8zM162 172.8h8v8h-8zM182 172.8h8v8h-8zM222 172.8h8v8h-8zM232 172.8h8v8h-8zM262 172.8h8v8h-8zM272 172.8h8v8h-8zM282 172.8h8v8h-8zM2 182.8h8v8h-8zM12 182.8h8v8h-8zM52 182.8h8v8h-8zM72 182.8h8v8h-8zM82 182.8h8v8h-8zM92 182.8h8v8h-8zM122 182.8h8v8h-8zM132 182.8h8v8h-8zM172 182.8h8v8h-8zM192 182.8h8v8h-8zM202 182.8h8v8h-8zM212 182.8h8v8h-8zM242 182.8h8v8h-8zM252 182.8h8v8h-8zM292 182.8h8v8h-8zM2 192.8h8v8h-8zM42 192.8h8v8h-8zM52 192.8h8v8h-8zM82 192.8h8v8h-8zM92 192.8h8v8h-8zM102 192.8h8v8h-8zM122 192.8h8v8h-8zM162 192.8h8v8h-8zM172 192.8h8v8h-8zM202 192.8h8v8h-8zM212 192.8h8v8h-8zM222 192.8h8v8h-8zM242 192.8h8v8h-8zM282 192.8h8v8h-8zM292 192.8h8v8h-8zM32 202.8h8v8h-8zM42 202.8h8v8h-8zM52 202.8h8v8h-8zM92 202.8h8v8h-8zM102 202.8h8v8h-8zM112 202.8h8v8h-8zM152 202.8h8v8h-8zM162 202.8h8v8h-8zM172 202.8h8v8h-8zM212 202.8h8v8h-8zM222 202.8h8v8h-8zM232 202.8h8v8h-8zM272 202.8h8v8h-8zM282 202.8h8v8h-8zM292 202.8h8v8h-8zM22 212.8h8v8h-8zM32 212.8h8v8h-8zM42 212.8h8v8h-8zM62 212.8h8v8h-8zM102 212.8h8v8h-8zM112 212.8h8v8h-8zM142 212.8h8v8h-8zM152 212.8h8v8h-8zM162 212.8h8v8h-8zM182 212.8h8v8h-8zM222 212.8h8v8h-8zM232 212.8h8v8h-8zM262 212.8h8v8h-8zM272 212.8h8v8h-8zM282 212.8h8v8h-8zM12 222.8h8v8h-8zM22 222.8h8v8h-8zM32 222.8h8v8h-8zM62 222.8h8v8h-8zM72 222.8h8v8h-8zM112 222.8h8v8h-8zM132 222.8h8v8h-8zM142 222.8h8v8h-8zM152 222.8h8v8h-8zM182 222.8h8v8h-8zM192 222.8h8v8h-8zM232 222.8h8v8h-8zM252 222.8h8v8h-8zM262 222.8h8v8h-8zM272 222.8h8v8h-8zM2 232.8h8v8h-8zM12 232.8h8v8h-8zM22 232.8h8v8h-8zM62 232.8h8v8h-8zM72 232.8h8v8h-8zM82 232.8h8v8h-8zM122 232.8h8v8h-8zM132 232.8h8v8h-8zM142 232.8h8v8h-8zM182 232.8h8v8h-8zM192 232.8h8v8h-8zM202 232.8h8v8h-8zM242 232.8h8v8h-8zM252 232.8h8v8h-8zM262 232.8h8v8h-8zM32 242.8h8v8h-8zM42 242.8h8v8h-8zM52 242.8h8v8h-8zM92 242.8h8v8h-8zM102 242.8h8v8h-8zM112 242.8h8v8h-8zM152 242.8h8v8h-8zM162 242.8h8v8h-8zM172 242.8h8v8h-8zM212 242.8h8v8h-8zM222 242.8h8v8h-8zM232 242.8h8v8h-8zM272 242.8h8v8h-8zM282 242.8h8v8h-8zM292 242.8h8v8h-8zM2 252.8h8v8h-8zM42 252.8h8v8h-8zM52 252.8h8v8h-8zM82 252.8h8v8h-8zM92 252.8h8v8h-8zM102 252.8h8v8h-8zM122 252.8h8v8h-8zM162 252.8h8v8h-8zM172 252.8h8v8h-8zM202 252.8h8v8h-8zM212 252.8h8v8h-8zM222 252.8h8v8h-8zM242 252.8h8v8h-8zM282 252.8h8v8h-8zM292 252.8h8v8h-8zM2 262.8h8v8h-8zM12 262.8h8v8h-8zM52 262.8h8v8h-8zM72 262.8h8v8h-8zM82 262.8h8v8h-8zM92 262.8h8v8h-8zM122 262.8h8v8h-8zM132 262.8h8v8h-8zM172 262.8h8v8h-8zM192 262.8h8v8h-8zM202 262.8h8v8h-8zM212 262.8h8v8h-8zM242 262.8h8v8h-8zM252 262.8h8v8h-8zM292 262.8h8v8h-8zM2 272.8h8v8h-8zM12 272.8h8v8h-8zM22 272.8h8v8h-8zM62 272.8h8v8h-8zM72 272.8h8v8h-8zM82 272.8h8v8h-8zM122 272.8h8v8h-8zM132 272.8h8v8h-8zM142 272.8h8v8h-8zM182 272.8h8v8h-8zM192 272.8h8v8h-8zM202 272.8h8v8h-8zM242 272.8h8v8h-8zM252 272.8h8v8h-8zM262 272.8h8v8h-8zM12 282.8h8v8h-8zM22 282.8h8v8h-8zM32 282.8h8v8h-8zM62 282.8h8v8h-8zM72 282.8h8v8h-8zM112 282.8h8v8h-8zM132 282.8h8v8h-8zM142 282.8h8v8h-8zM152 282.8h8v8h-8zM182 282.8h8v8h-8zM192 282.8h8v8h-8zM232 282.8h8v8h-8zM252 282.8h8v8h-8zM262 282.8h8v8h-8zM272 282.8h8v8h-8zM22 292.8h8v8h-8zM32 292.8h8v8h-8zM42 292.8h8v8h-8zM62 292.8h8v8h-8zM102 292.8h8v8h-8zM112 292.8h8v8h-8zM142 292.8h8v8h-8zM152 292.8h8v8h-8zM162 292.8h8v8h-8zM182 292.8h8v8h-8zM222 292.8h8v8h-8zM232 292.8h8v8h-8zM262 292.8h8v8h-8zM272 292.8h8v8h-8zM282 292.8h8v8h-8z"/><path fill="#fff" d="M2 2.8h8v8h-8zM12 2.8h8v8h-8zM22 2.8h8v8h-8zM62 2.8h8v8h-8zM72 2.8h8v8h-8zM82 2.8h8v8h-8zM122 2.8h8v8h-8zM132 2.8h8v8h-8zM142 2.8h8v8h-8zM182 2.8h8v8h-8zM192 2.8h8v8h-8zM202 2.8h8v8h-8zM242 2.8h8v8h-8zM252 2.8h8v8h-8zM262 2.8h8v8h-8zM12 12.8h8v8h-8zM22 12.8h8v8h-8zM32 12.8h8v8h-8zM62 12.8h8v8h-8zM72 12.8h8v8h-8zM112 12.8h8v8h-8zM132 12.8h8v8h-8zM142 12.8h8v8h-8zM152 12.8h8v8h-8zM182 12.8h8v8h-8zM192 12.8h8v8h-8zM232 12.8h8v8h-8zM252 12.8h8v8h-8zM262 12.8h8v8h-8zM272 12.8h8v8h-8zM22 22.8h8v8h-8zM32 22.8h8v8h-8zM42 22.8h8v8h-8zM62 22.8h8v8h-8zM102 22.8h8v8h-8zM112 22.8h8v8h-8zM142 22.8h8v8h-8zM152 22.8h8v8h-8zM162 22.8h8v8h-8zM182 22.8h8v8h-8zM222 22.8h8v8h-8zM232 22.8h8v8h-8zM262 22.8h8v8h-8zM272 22.8h8v8h-8zM282 22.8h8v8h-8zM32 32.8h8v8h-8zM42 32.8h8v8h-8zM52 32.8h8v8h-8zM92 32.8h8v8h-8zM102 32.8h8v8h-8zM112 32.8h8v8h-8zM152 32.8h8v8h-8zM162 32.8h8v8h-8zM172 32.8h8v8h-8zM212 32.8h8v8h-8zM222 32.8h8v8h-8zM232 32.8h8v8h-8zM272 32.8h8v8h-8zM282 32.8h8v8h-8zM292 32.8h8v8h-8zM2 42.8h8v8h-8zM42 42.8h8v8h-8zM52 42.8h8v8h-8zM82 42.8h8v8h-8zM92 42.8h8v8h-8zM102 42.8h8v8h-8zM122 42.8h8v8h-8zM162 42.8h8v8h-8zM172 42.8h8v8h-8zM202 42.8h8v8h-8zM212 42.8h8v8h-8zM222 42.8h8v8h-8zM242 42.8h8v8h-8zM282 42.8h8v8h-8zM292 42.8h8v8h-8zM2 52.8h8v8h-8zM12 52.8h8v8h-8zM52 52.8h8v8h-8zM72 52.8h8v8h-8zM82 52.8h8v8h-8zM92 52.8h8v8h-8zM122 52.8h8v8h-8zM132 52.8h8v8h-8zM172 52.8h8v8h-8zM192 52.8h8v8h-8zM202 52.8h8v8h-8zM212 52.8h8v8h-8zM242 52.8h8v8h-8zM252 52.8h8v8h-8zM292 52.8h8v8h-8zM22 62.8h8v8h-8zM32 62.8h8v8h-8zM42 62.8h8v8h-8zM62 62.8h8v8h-8zM102 62.8h8v8h-8zM112 62.8h8v8h-8zM142 62.8h8v8h-8zM152 62.8h8v8h-8zM162 62.8h8v8h-8zM182 62.8h8v8h-8zM222 62.8h8v8h-8zM232 62.8h8v8h-8zM262 62.8h8v8h-8zM272 62.8h8v8h-8zM282 62.8h8v8h-8zM12 72.8h8v8h-8zM22 72.8h8v8h-8zM32 72.8h8v8h-8zM62 72.8h8v8h-8zM72 72.8h8v8h-8zM112 72.8h8v8h-8zM132 72.8h8v8h-8zM142 72.8h8v8h-8zM152 72.8h8v8h-8zM182 72.8h8v8h-8zM192 72.8h8v8h-8zM232 72.8h8v8h-8zM252 72.8h8v8h-8zM262 72.8h8v8h-8zM272 72.8h8v8h-8zM2 82.8h8v8h-8zM12 82.8h8v8h-8zM22 82.8h8v8h-8zM62 82.8h8v8h-8zM72 82.8h8v8h-8zM82 82.8h8v8h-8zM122 82.8h8v8h-8zM132 82.8h8v8h-8zM142 82.8h8v8h-8zM182 82.8h8v8h-8zM192 82.8h8v8h-8zM202 82.8h8v8h-8zM242 82.8h8v8h-8zM252 82.8h8v8h-8zM262 82.8h8v8h-8zM2 92.8h8v8h-8zM12 92.8h8v8h-8zM52 92.8h8v8h-8zM72 92.8h8v8h-8zM82 92.8h8v8h-8zM92 92.8h8v8h-8zM122 92.8h8v8h-8zM132 92.8h8v8h-8zM172 92.8h8v8h-8zM192 92.8h8v8h-8zM202 92.8h8v8h-8zM212 92.8h8v8h-8zM242 92.8h8v8h-8zM252 92.8h8v8h-8zM292 92.8h8v8h-8zM2 102.8h8v8h-8zM42 102.8h8v8h-8zM52 102.8h8v8h-8zM82 102.8h8v8h-8zM92 102.8h8v8h-8zM102 102.8h8v8h-8zM122 102.8h8v8h-8zM162 102.8h8v8h-8zM172 102.8h8v8h-8zM202 102.8h8v8h-8zM212 102.8h8v8h-8zM222 102.8h8v8h-8zM242 102.8h8v8h-8zM282 102.8h8v8h-8zM292 102.8h8v8h-8zM32 112.8h8v8h-8zM42 112.8h8v8h-8zM52 112.8h8v8h-8zM92 112.8h8v8h-8zM102 112.8h8v8h-8zM112 112.8h8v8h-8zM152 112.8h8v8h-8zM162 112.8h8v8h-8zM172 112.8h8v8h-8zM212 112.8h8v8h-8zM222 112.8h8v8h-8zM232 112.8h8v8h-8zM272 112.8h8v8h-8zM282 112.8h8v8h-8zM292 112.8h8v8h-8zM2 122.8h8v8h-8zM12 122.8h8v8h-8zM22 122.8h8v8h-8zM62 122.8h8v8h-8zM72 122.8h8v8h-8zM82 122.8h8v8h-8zM122 122.8h8v8h-8zM132 122.8h8v8h-8zM142 122.8h8v8h-8zM182 122.8h8v8h-8zM192 122.8h8v8h-8zM202 122.8h8v8h-8zM242 122.8h8v8h-8zM252 122.8h8v8h-8zM262 122.8h8v8h-8zM12 132.8h8v8h-8zM22 132.8h8v8h-8zM32 132.8h8v8h-8zM62 132.8h8v8h-8zM72 132.8h8v8h-8zM112 132.8h8v8h-8zM132 132.8h8v8h-8zM142 132.8h8v8h-8zM152 132.8h8v8h-8zM182 132.8h8v8h-8zM192 132.8h8v8h-8zM232 132.8h8v8h-8zM252 132.8h8v8h-8zM262 132.8h8v8h-8zM272 132.8h8v8h-8zM22 142.8h8v8h-8zM32 142.8h8v8h-8zM42 142.8h8v8h-8zM62 142.8h8v8h-8zM102 142.8h8v8h-8zM112 142.8h8v8h-8zM142 142.8h8v8h-8zM152 142.8h8v8h-8zM162 142.8h8v8h-8zM182 142.8h8v8h-8zM222 142.8h8v8h-8zM232 142.8h8v8h-8zM262 142.8h8v8h-8zM272 142.8h8v8h-8zM282 142.8h8v8h-8zM32 152.8h8v8h-8zM42 152.8h8v8h-8zM52 152.8h8v8h-8zM92 152.8h8v8h-8zM102 152.8h8v8h-8zM112 152.8h8v8h-8zM152 152.8h8v8h-8zM162 152.8h8v8h-8zM172 152.8h8v8h-8zM212 152.8h8v8h-8zM222 152.8h8v8h-8zM232 152.8h8v8h-8zM272 152.8h8v8h-8zM282 152.8h8v8h-8zM292 152.8h8v8h-8zM2 162.8h8v8h-8zM42 162.8h8v8h-8zM52 162.8h8v8h-8zM82 162.8h8v8h-8zM92 162.8h8v8h-8zM102 162.8h8v8h-8zM122 162.8h8v8h-8zM162 162.8h8v8h-8zM172 162.8h8v8h-8zM202 162.8h8v8h-8zM212 162.8h8v8h-8zM222 162.8h8v8h-8zM242 162.8h8v8h-8zM282 162.8h8v8h-8zM292 162.8h8v8h-8zM2 172.8h8v8h-8zM12 172.8h8v8h-8zM52 172.8h8v8h-8zM72 172.8h8v8h-8zM82 172.8h8v8h-8zM92 172.8h8v8h-8zM122 172.8h8v8h-8zM132 172.8h8v8h-8zM172 172.8h8v8h-8zM192 172.8h8v8h-8zM202 172.8h8v8h-8zM212 172.8h8v8h-8zM242 172.8h8v8h-8zM252 172.8h8v8h-8zM292 172.8h8v8h-8zM22 182.8h8v8h-8zM32 182.8h8v8h-8zM42 182.8h8v8h-8zM62 182.8h8v8h-8zM102 182.8h8v8h-8zM112 182.8h8v8h-8zM142 182.8h8v8h-8zM152 182.8h8v8h-8zM162 182.8h8v8h-8zM182 182.8h8v8h-8zM222 182.8h8v8h-8zM232 182.8h8v8h-8zM262 182.8h8v8h-8zM272 182.8h8v8h-8zM282 182.8h8v8h-8zM12 192.8h8v8h-8zM22 192.8h8v8h-8zM32 192.8h8v8h-8zM62 192.8h8v8h-8zM72 192.8h8v8h-8zM112 192.8h8v8h-8zM132 192.8h8v8h-8zM142 192.8h8v8h-8zM152 192.8h8v8h-8zM182 192.8h8v8h-8zM192 192.8h8v8h-8zM232 192.8h8v8h-8zM252 192.8h8v8h-8zM262 192.8h8v8h-8zM272 192.8h8v8h-8zM2 202.8h8v8h-8zM12 202.8h8v8h-8zM22 202.8h8v8h-8zM62 202.8h8v8h-8zM72 202.8h8v8h-8zM82 202.8h8v8h-8zM122 202.8h8v8h-8zM132 202.8h8v8h-8zM142 202.8h8v8h-8zM182 202.8h8v8h-8zM192 202.8h8v8h-8zM202 202.8h8v8h-8zM242 202.8h8v8h-8zM252 202.8h8v8h-8zM262 202.8h8v8h-8zM2 212.8h8v8h-8zM12 212.8h8v8h-8zM52 212.8h8v8h-8zM72 212.8h8v8h-8zM82 212.8h8v8h-8zM92 212.8h8v8h-8zM122 212.8h8v8h-8zM132 212.8h8v8h-8zM172 212.8h8v8h-8zM192 212.8h8v8h-8zM202 212.8h8v8h-8zM212 212.8h8v8h-8zM242 212.8h8v8h-8zM252 212.8h8v8h-8zM292 212.8h8v8h-8zM2 222.8h8v8h-8zM42 222.8h8v8h-8zM52 222.8h8v8h-8zM82 222.8h8v8h-8zM92 222.8h8v8h-8zM102 222.8h8v8h-8zM122 222.8h8v8h-8zM162 222.8h8v8h-8zM172 222.8h8v8h-8zM202 222.8h8v8h-8zM212 222.8h8v8h-8zM222 222.8h8v8h-8zM242 222.8h8v8h-8zM282 222.8h8v8h-8zM292 222.8h8v8h-8zM32 232.8h8v8h-8zM42 232.8h8v8h-8zM52 232.8h8v8h-8zM92 232.8h8v8h-8zM102 232.8h8v8h-8zM112 232.8h8v8h-8zM152 232.8h8v8h-8zM162 232.8h8v8h-8zM172 232.8h8v8h-8zM212 232.8h8v8h-8zM222 232.8h8v8h-8zM232 232.8h8v8h-8zM272 232.8h8v8h-8zM282 232.8h8v8h-8zM292 232.8h8v8h-8zM2 242.8h8v8h-8zM12 242.8h8v8h-8zM22 242.8h8v8h-8zM62 242.8h8v8h-8zM72 242.8h8v8h-8zM82 242.8h8v8h-8zM122 242.8h8v8h-8zM132 242.8h8v8h-8zM142 242.8h8v8h-8zM182 242.8h8v8h-8zM192 242.8h8v8h-8zM202 242.8h8v8h-8zM242 242.8h8v8h-8zM252 242.8h8v8h-8zM262 242.8h8v8h-8zM12 252.8h8v8h-8zM22 252.8h8v8h-8zM32 252.8h8v8h-8zM62 252.8h8v8h-8zM72 252.8h8v8h-8zM112 252.8h8v8h-8zM132 252.8h8v8h-8zM142 252.8h8v8h-8zM152 252.8h8v8h-8zM182 252.8h8v8h-8zM192 252.8h8v8h-8zM232 252.8h8v8h-8zM252 252.8h8v8h-8zM262 252.8h8v8h-8zM272 252.8h8v8h-8zM22 262.8h8v8h-8zM32 262.8h8v8h-8zM42 262.8h8v8h-8zM62 262.8h8v8h-8zM102 262.8h8v8h-8zM112 262.8h8v8h-8zM142 262.8h8v8h-8zM152 262.8h8v8h-8zM162 262.8h8v8h-8zM182 262.8h8v8h-8zM222 262.8h8v8h-8zM232 262.8h8v8h-8zM262 262.8h8v8h-8zM272 262.8h8v8h-8zM282 262.8h8v8h-8zM32 272.8h8v8h-8zM42 272.8h8v8h-8zM52 272.8h8v8h-8zM92 272.8h8v8h-8zM102 272.8h8v8h-8zM112 272.8h8v8h-8zM152 272.8h8v8h-8zM162 272.8h8v8h-8zM172 272.8h8v8h-8zM212 272.8h8v8h-8zM222 272.8h8v8h-8zM232 272.8h8v8h-8zM272 272.8h8v8h-8zM282 272.8h8v8h-8zM292 272.8h8v8h-8zM2 282.8h8v8h-8zM42 282.8h8v8h-8zM52 282.8h8v8h-8zM82 282.8h8v8h-8zM92 282.8h8v8h-8zM102 282.8h8v8h-8zM122 282.8h8v8h-8zM162 282.8h8v8h-8zM172 282.8h8v8h-8zM202 282.8h8v8h-8zM212 282.8h8v8h-8zM222 282.8h8v8h-8zM242 282.8h8v8h-8zM282 282.8h8v8h-8zM292 282.8h8v8h-8zM2 292.8h8v8h-8zM12 292.8h8v8h-8zM52 292.8h8v8h-8zM72 292.8h8v8h-8zM82 292.8h8v8h-8zM92 292.8h8v8h-8zM122 292.8h8v8h-8zM132 292.8h8v8h-8zM172 292.8h8v8h-8zM192 292.8h8v8h-8zM202 292.8h8v8h-8zM212 292.8h8v8h-8zM242 292.8h8v8h-8zM252 292.8h8v8h-8zM292 292.8h8v8h-8z"/></svg><div class="t" style="left:1013px;transform:translateX(-50%) scaleX(1.0);top:554.64px;font-size:12px;line-height:12px;font-weight:400;color:#000;">Name: Diaper Weave</div><div class="t" style="left:1013px;transform:translateX(-50%) scaleX(1.0);top:568.41px;font-size:12px;line-height:12px;font-weight:400;color:#000;">Shaft: 6</div><div class="t" style="left:1013px;transform:translateX(-50%) scaleX(1.0);top:582.18px;font-size:12px;line-height:12px;font-weight:400;color:#000;">TRADELES: 6</div><div class="t" style="left:1013px;transform:translateX(-50%) scaleX(1.0);top:595.95px;font-size:12px;line-height:12px;font-weight:400;color:#000;">Weft repeat: 0</div><div class="t" style="left:1013px;transform:translateX(-50%) scaleX(1.0);top:609.72px;font-size:12px;line-height:12px;font-weight:400;color:#000;">Warp repeat: 0</div><div class="t" style="left:1013px;transform:translateX(-50%) scaleX(1.0);top:623.49px;font-size:12px;line-height:12px;font-weight:400;color:#000;">Weft float: 0</div><div class="t" style="left:1013px;transform:translateX(-50%) scaleX(1.0);top:637.26px;font-size:12px;line-height:12px;font-weight:400;color:#000;">Warp float: 0</div><div class="t" style="left:1013px;transform:translateX(-50%) scaleX(1.0);top:651.03px;font-size:12px;line-height:12px;font-weight:400;color:#000;">Weave Category: twill</div><div class="t" style="left:1013px;transform:translateX(-50%) scaleX(1.0);top:664.80px;font-size:12px;line-height:12px;font-weight:400;color:#000;">WEAVETYPE: wif</div><div class="t" style="left:1013px;transform:translateX(-50%) scaleX(1.0);top:678.57px;font-size:12px;line-height:12px;font-weight:400;color:#000;">Lift Plan (y/n) : 0</div><div class="t" style="left:1013px;transform:translateX(-50%) scaleX(1.0);top:692.34px;font-size:12px;line-height:12px;font-weight:400;color:#000;">Contains Color (y/n): 0</div><div class="t" style="left:1013px;transform:translateX(-50%) scaleX(1.0);top:706.11px;font-size:12px;line-height:12px;font-weight:400;color:#000;">Used: 0</div><div class="t" style="left:1013px;transform:translateX(-50%) scaleX(1.0);top:719.88px;font-size:12px;line-height:12px;font-weight:400;color:#000;">Permission: Public</div><div class="t" style="left:1013px;transform:translateX(-50%) scaleX(1.0);top:733.65px;font-size:12px;line-height:12px;font-weight:400;color:#000;">By: USER</div><div class="t" style="left:1013px;transform:translateX(-50%) scaleX(1.0);top:747.42px;font-size:12px;line-height:12px;font-weight:400;color:#000;">Date: 2019-02-20 09:50:52.0</div><div style="position:absolute;left:1110px;top:533px;width:187px;height:39px;background:linear-gradient(#c6c9cc,#b7bec7);border:1px solid #858585;box-sizing:border-box"></div><div style="position:absolute;left:1110px;top:572px;width:187px;height:1px;background:#b0b8c0;opacity:0.6"></div><div class="t" style="left:1202.5px;top:545.84px;font-size:12px;line-height:12px;font-weight:700;color:#676c73;">Export</div><svg style="position:absolute;left:1163px;top:533px" width="40" height="40" viewBox="0 0 40 40">
<defs><linearGradient id="pg623269" x1="0" y1="0" x2="1" y2="1"><stop offset="0.55" stop-color="#d8d8da"/><stop offset="1" stop-color="#aecde6"/></linearGradient>
<linearGradient id="ar623269" x1="0" y1="0" x2="1" y2="0"><stop offset="0" stop-color="#3fa8d0"/><stop offset="0.6" stop-color="#8fd4e8"/><stop offset="1" stop-color="#4fb0d8"/></linearGradient></defs>
<rect x="7" y="5" width="19.5" height="28" rx="0.8" fill="url(#pg623269)" stroke="#7a87c8" stroke-width="1.7"/>
<path d="M15 9.8C10.5 12.5 10 19 13.5 20.5L21 20L20.5 17.5L32 15L28.5 26L26 24.5C20 27 13 26.5 11.5 21C10 16 12 12 15 9.8Z" fill="url(#ar623269)"/>
<path d="M15 9.8C11 12.5 10.5 18.5 13.8 20.2" fill="none" stroke="#2d6f96" stroke-width="1" opacity="0.7"/>
</svg><div style="position:absolute;left:1110px;top:575px;width:187px;height:39px;background:linear-gradient(#c6c9cc,#b7bec7);border:1px solid #858585;box-sizing:border-box"></div><div style="position:absolute;left:1110px;top:614px;width:187px;height:1px;background:#b0b8c0;opacity:0.6"></div><div class="t" style="left:1203.3px;top:587.84px;font-size:12px;line-height:12px;font-weight:700;color:#676c73;">Delete</div><svg style="position:absolute;left:1163px;top:575px" width="40" height="40" viewBox="0 0 40 40">
<path d="M14.3 4H21.9V6.8H28V11H8V6.8H14.3Z" fill="#6690c2"/><rect x="16" y="5.5" width="4" height="1" fill="#c8cdd4"/>
<path d="M9.6 13H26.8L26.2 20A8.5 8.5 0 0 0 18.8 34H11.2Z" fill="#6690c2"/>
<circle cx="26.8" cy="28.1" r="7.2" fill="#6690c2"/>
<path d="M23.8 25.1L29.8 31.1M29.8 25.1L23.8 31.1" stroke="#dfe3ea" stroke-width="1.9"/>
</svg><div style="position:absolute;left:1110px;top:617px;width:187px;height:39px;background:linear-gradient(#c6c9cc,#b7bec7);border:1px solid #858585;box-sizing:border-box"></div><div style="position:absolute;left:1110px;top:656px;width:187px;height:1px;background:#b0b8c0;opacity:0.6"></div><div class="t" style="left:1177.5px;top:629.84px;font-size:12px;line-height:12px;font-weight:700;color:#676c73;">Export &amp; Delete</div><svg style="position:absolute;left:1138px;top:617px" width="40" height="40" viewBox="0 0 40 40">
<defs><linearGradient id="ed623269" x1="0" y1="0" x2="1" y2="0"><stop offset="0" stop-color="#7898c8"/><stop offset="1" stop-color="#80c0d8"/></linearGradient></defs>
<path d="M4 7.5C6.5 10 9.5 11 13 10.8L13.5 8.5L23 6.5L19.5 15.3L17.8 12.8C13.5 15.5 7.5 13.5 4 7.5Z" fill="url(#ed623269)"/>
<path d="M11 22.4H17M14 19.4V25.4" stroke="#585858" stroke-width="1.3"/>
<path d="M20 16.2H32.8V18H20Z" fill="#7898c0"/><rect x="24.5" y="15" width="4" height="1.4" rx="0.7" fill="#7898c0"/>
<path d="M20.6 19H31.8V30.5Q31.8 32.8 29.5 32.8H22.9Q20.6 32.8 20.6 30.5Z" fill="#7898c0"/>
<path d="M23.4 21.5V30.5M26.2 21.5V30.5M29 21.5V30.5" stroke="#c6ccd4" stroke-width="0.9"/>
</svg><div style="position:absolute;left:1110px;top:659px;width:187px;height:39px;background:linear-gradient(#c6c9cc,#b7bec7);border:1px solid #858585;box-sizing:border-box"></div><div style="position:absolute;left:1110px;top:698px;width:187px;height:1px;background:#b0b8c0;opacity:0.6"></div><div class="t" style="left:1165.2px;top:671.84px;font-size:12px;line-height:12px;font-weight:700;color:#676c73;">Change Permission</div><svg style="position:absolute;left:1123px;top:659px" width="40" height="40" viewBox="0 0 40 40">
<polygon points="31.91,19.88 34.54,22.02 33.96,23.70 30.58,23.80 29.81,24.95 31.02,28.12 29.68,29.29 26.70,27.68 25.46,28.29 24.92,31.64 23.18,31.98 21.40,29.10 20.02,29.01 17.88,31.64 16.20,31.06 16.10,27.68 14.95,26.91 11.78,28.12 10.61,26.78 12.22,23.80 11.61,22.56 8.26,22.02 7.92,20.28 10.80,18.50 10.89,17.12 8.26,14.98 8.84,13.30 12.22,13.20 12.99,12.05 11.78,8.88 13.12,7.71 16.10,9.32 17.34,8.71 17.88,5.36 19.62,5.02 21.40,7.90 22.78,7.99 24.92,5.36 26.60,5.94 26.70,9.32 27.85,10.09 31.02,8.88 32.19,10.22 30.58,13.20 31.19,14.44 34.54,14.98 34.88,16.72 32.00,18.50" fill="#6090cc"/>
<circle cx="21.4" cy="18.5" r="7.6" fill="#cfd3d8"/><circle cx="21.4" cy="18.5" r="5.2" fill="#6090cc"/><circle cx="21.4" cy="18.5" r="4" fill="#d2d4d8"/>
</svg><div style="position:absolute;left:1110px;top:701px;width:187px;height:39px;background:linear-gradient(#eef3f9,#dfe8f2 50%,#c9dbec);border:1px solid #505050;box-sizing:border-box"></div><div style="position:absolute;left:1110px;top:740px;width:187px;height:1px;background:#b0b8c0;opacity:0.6"></div><div class="t" style="left:1206.9px;top:713.84px;font-size:12px;line-height:12px;font-weight:700;color:#000;">Copy</div><svg style="position:absolute;left:1163px;top:701px" width="40" height="40" viewBox="0 0 40 40">
<defs><linearGradient id="cp623269" x1="0" y1="0" x2="1" y2="1"><stop offset="0.5" stop-color="#fff"/><stop offset="1" stop-color="#a8d0f8"/></linearGradient></defs>
<path d="M19 5.2H32.5L35.8 8.5V28.2H19Z" fill="url(#cp623269)" stroke="#0a18b8" stroke-width="1.5"/>
<path d="M32.2 5.2V8.8H35.8Z" fill="#0a18b8"/>
<path d="M11.3 9.3H25.3L28.7 12.6V32.6H11.3Z" fill="url(#cp623269)" stroke="#0a18b8" stroke-width="1.5"/>
<path d="M25 9.3V12.9H28.7Z" fill="#0a18b8"/>
</svg><div style="position:absolute;left:1110px;top:743px;width:187px;height:39px;background:linear-gradient(#eef3f9,#dfe8f2 50%,#c9dbec);border:1px solid #505050;box-sizing:border-box"></div><div style="position:absolute;left:1110px;top:782px;width:187px;height:1px;background:#b0b8c0;opacity:0.6"></div><div class="t" style="left:1157.3px;top:755.84px;font-size:12px;line-height:12px;font-weight:700;color:#000;">Fabric Creator (Editor)</div><svg style="position:absolute;left:1118px;top:743px" width="40" height="40" viewBox="0 0 40 40">
<defs><pattern id="fd623269" width="5" height="5" patternUnits="userSpaceOnUse" x="6" y="6"><circle cx="2" cy="2" r="0.65" fill="#2e6f8e"/><circle cx="4.5" cy="4.5" r="0.55" fill="#3a88a8"/></pattern></defs>
<rect x="5.5" y="5.2" width="18" height="26.5" fill="#4cc8f0" stroke="#3a3a3a" stroke-width="1" stroke-dasharray="1.3 1.1"/>
<rect x="6" y="5.7" width="17" height="25.5" fill="url(#fd623269)"/>
<path d="M25 13.8L31.8 7.5L31.8 14.2L28.4 17.6Z" fill="#1a1a1a"/>
<path d="M17.2 22.2L25 13.8L28.4 17.6L19.6 24.6Z" fill="#f2c9a0"/>
<path d="M14.2 27.2L17.2 22.2L19.6 24.6Z" fill="#1e1e1e"/>
</svg></div></div><div style="position:absolute;left:1300px;top:263px;width:12px;height:436px;background:#9a9a9a"></div><div style="position:absolute;left:1301px;top:264px;width:10px;height:9px;background:linear-gradient(#e8e8e8,#c8c8c8)"></div><svg style="position:absolute;left:1300px;top:264px" width="12" height="9" viewBox="0 0 12 9"><path d="M2.9 5H9L5.95 1.4Z" fill="#303030"/><rect x="3" y="6" width="6" height="1.2" fill="#fff"/></svg><div style="position:absolute;left:1301px;top:273px;width:10px;height:417px;background:#e4e4e4"></div><div style="position:absolute;left:1301px;top:273px;width:10px;height:136px;background:linear-gradient(90deg,#fcfcfc,#d8d8d8 40%,#bdbdbd);border:1px solid #a4a4a4;border-radius:5px;box-sizing:border-box"></div><div style="position:absolute;left:1301px;top:409px;width:10px;height:280px;background:linear-gradient(90deg,#f4f4f4,#e0e0e0);border-radius:0 0 5px 5px"></div><div style="position:absolute;left:1301px;top:690px;width:10px;height:8px;background:linear-gradient(#e8e8e8,#c8c8c8)"></div><svg style="position:absolute;left:1300px;top:690px" width="12" height="8" viewBox="0 0 12 8"><path d="M2.9 1.5H9L5.95 5Z" fill="#303030"/></svg><div style="position:absolute;left:792px;top:235px;width:82px;height:146px;background:#fff;border:1px solid #9a9a9a;box-sizing:border-box;box-shadow:0 1px 6px 1px rgba(0,0,0,0.22)"></div><div style="position:absolute;left:793px;top:235px;width:80px;height:24px;background:linear-gradient(#0a86e6,#0066c2)"></div><div style="position:absolute;left:793px;top:259px;width:80px;height:24px;background:#c9def2"></div><div class="t" style="left:798px;top:241.84px;font-size:12px;line-height:12px;font-weight:400;color:#fff;transform:scaleX(0.95);transform-origin:left;">Name</div><div class="t" style="left:798px;top:265.84px;font-size:12px;line-height:12px;font-weight:400;color:#222;transform:scaleX(0.95);transform-origin:left;">Date</div><div class="t" style="left:798px;top:289.84px;font-size:12px;line-height:12px;font-weight:400;color:#222;transform:scaleX(0.95);transform-origin:left;">Shaft</div><div class="t" style="left:798px;top:313.84px;font-size:12px;line-height:12px;font-weight:400;color:#222;transform:scaleX(0.95);transform-origin:left;">Treadles</div><div class="t" style="left:798px;top:337.84px;font-size:12px;line-height:12px;font-weight:400;color:#222;transform:scaleX(0.95);transform-origin:left;">Float X</div><div class="t" style="left:798px;top:361.84px;font-size:12px;line-height:12px;font-weight:400;color:#222;transform:scaleX(0.95);transform-origin:left;">Float Y</div><div style="position:absolute;left:70px;top:709px;width:131px;height:28px;background:linear-gradient(#eef3f9,#dfe8f2 50%,#c9dbec);border:1px solid #505050;box-sizing:border-box"></div><div class="t" style="left:111.1px;top:717.04px;font-size:12px;line-height:12px;font-weight:700;color:#000;">Export Import</div><svg style="position:absolute;left:76px;top:708px" width="36" height="30" viewBox="0 0 36 30"><g fill="#3d8ad0" transform="translate(17.8 15) rotate(-35) scale(0.9)"><path d="M-2 -8V8H-5A8 8 0 0 1 -5 -8Z"/><rect x="-15" y="-2" width="3.5" height="4"/><rect x="-2" y="-8" width="5" height="3.5"/><rect x="-2" y="-1.8" width="5" height="3.6"/><rect x="-2" y="4.5" width="5" height="3.5"/><path d="M5 -7H9A7 7 0 0 1 9 7H5Z"/><rect x="3" y="-3.2" width="3" height="2.2"/><rect x="3" y="1" width="3" height="2.2"/><rect x="15" y="-2" width="3.5" height="4"/></g></svg><div style="position:absolute;left:211px;top:713px;width:30px;height:21px;background:linear-gradient(#c6c9cc,#b7bec7);border:1px solid #858585;box-sizing:border-box"></div><div class="t" style="left:226px;transform:translateX(-50%) scaleX(1.0);top:716.24px;font-size:12px;line-height:12px;font-weight:700;color:#6c6c6c;">&lt;</div><div style="position:absolute;left:251px;top:713px;width:30px;height:21px;background:linear-gradient(#eef3f9,#c9dbec);border:1px solid #505050;box-sizing:border-box"></div><div class="t" style="left:266px;transform:translateX(-50%) scaleX(1.0);top:716.24px;font-size:12px;line-height:12px;font-weight:700;color:#000;">&gt;</div><div style="position:absolute;left:3px;top:747px;width:1363px;height:21px;background:#fff"></div><div class="t" style="left:23.2px;top:751.26px;font-size:16px;line-height:16px;font-weight:700;color:#000;transform:scaleX(1.1203288490284005);transform-origin:left;-webkit-text-stroke:0.35px #000;">Welcome TO DigiBunai™ CAD Tool</div></body></html>
